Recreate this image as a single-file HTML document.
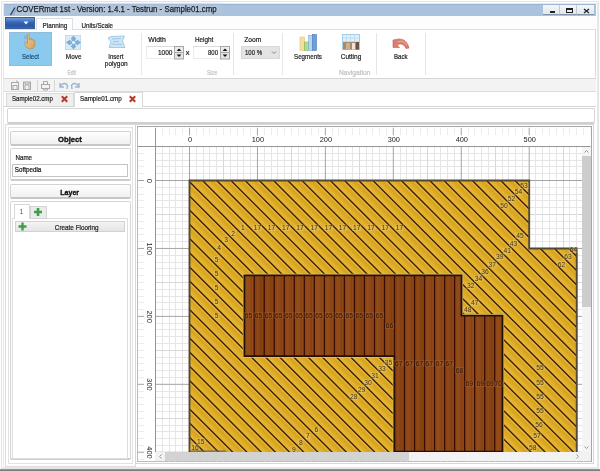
<!DOCTYPE html>
<html><head><meta charset="utf-8"><style>
html,body{margin:0;padding:0;}
body{width:600px;height:471px;position:relative;overflow:hidden;background:#fff;font-family:"Liberation Sans",sans-serif;}
.a{position:absolute;}
svg{will-change:transform;}
</style></head><body>

<!-- window frame -->
<div class="a" style="left:1px;top:1px;width:598px;height:468px;border:1px solid #e4e4e4;box-sizing:border-box"></div>
<div class="a" style="left:0;top:469px;width:600px;height:2px;background:linear-gradient(#a0a0a0,#707070)"></div>
<div class="a" style="left:3px;top:3px;width:595px;height:465px;border:1px solid #e8e8e8;box-sizing:border-box"></div>
<!-- title bar -->
<div class="a" style="left:4px;top:4px;width:592px;height:12px;background:#a9c2dd;border-top:1px solid #9cb5d2;box-sizing:border-box"></div>
<div class="a" style="left:12px;top:5px;width:210px;height:10px;background:#b3c4d8;filter:blur(2px)"></div>
<svg class="a" style="left:9px;top:6px" width="8" height="10"><path d="M1.5 9 L6 1.5" stroke="#253a60" stroke-width="1.4"/><path d="M4 9 L7.5 3.5" stroke="#7f94b4" stroke-width="0.8"/></svg>
<!-- window buttons -->
<div class="a" style="left:543px;top:5px;width:16px;height:10px;background:linear-gradient(#f4f6f9,#e2e7ee);border-bottom:1px solid #8494aa;box-sizing:border-box"></div>
<div class="a" style="left:559px;top:5px;width:17px;height:10px;background:linear-gradient(#f4f6f9,#e2e7ee);border-bottom:1px solid #8494aa;border-left:1px solid #c0c8d4;box-sizing:border-box"></div>
<div class="a" style="left:576px;top:5px;width:18px;height:10px;background:linear-gradient(#f4f6f9,#e2e7ee);border-bottom:1px solid #8494aa;border-left:1px solid #c0c8d4;box-sizing:border-box"></div>
<div class="a" style="left:550px;top:11px;width:5px;height:2px;background:#222"></div>
<div class="a" style="left:566px;top:8px;width:7px;height:5px;border:1px solid #222;border-top-width:2px;box-sizing:border-box"></div>
<svg class="a" style="left:583px;top:8px" width="7" height="6"><path d="M1 1 L6 5 M6 1 L1 5" stroke="#222" stroke-width="1.3"/></svg>
<!-- ribbon tab row -->
<div class="a" style="left:4px;top:16px;width:592px;height:14px;background:#fdfdfd"></div>
<div class="a" style="left:5px;top:17px;width:30px;height:12px;background:linear-gradient(#6f98d6,#3565b8 45%,#2a56a6 80%,#3a68b8);border:1px solid #3d5e96;box-sizing:border-box"></div>
<svg class="a" style="left:23px;top:21px" width="6" height="4"><path d="M0.5 0.5 L5.5 0.5 L3 3.5 Z" fill="#f4f8ff"/></svg>
<div class="a" style="left:4px;top:29px;width:592px;height:1px;background:#d9dfe6"></div>
<div class="a" style="left:36px;top:18px;width:37px;height:12px;background:#fff;border:1px solid #d9dfe6;border-bottom:none;box-sizing:border-box"></div>
<!-- ribbon body -->
<div class="a" style="left:4px;top:30px;width:592px;height:47px;background:#fff;"></div>
<div class="a" style="left:4px;top:78px;width:592px;height:1px;background:#d6d6d6"></div>
<div class="a" style="left:595px;top:29px;width:1px;height:50px;background:#dcdcdc"></div>
<div class="a" style="left:9px;top:32px;width:43px;height:34px;background:#8acaee;border:1px solid #92bcd8;box-sizing:border-box"></div>
<div class="a" style="left:141px;top:33px;width:1px;height:42px;background:#e6e6e6"></div>
<div class="a" style="left:146px;top:46px;width:29px;height:13px;background:#fff;border:1px solid #ececec;border-top-color:#dcdcdc;box-sizing:border-box"></div>
<div class="a" style="left:193px;top:46px;width:28px;height:13px;background:#fff;border:1px solid #ececec;border-top-color:#dcdcdc;box-sizing:border-box"></div>
<div class="a" style="left:233px;top:33px;width:1px;height:42px;background:#e6e6e6"></div>
<div class="a" style="left:241px;top:46px;width:39px;height:13px;background:#e4e4e4;border:1px solid #d8d8d8;box-sizing:border-box"></div>
<div class="a" style="left:282px;top:33px;width:1px;height:42px;background:#e6e6e6"></div>
<div class="a" style="left:376px;top:33px;width:1px;height:42px;background:#e6e6e6"></div>
<div class="a" style="left:425px;top:33px;width:1px;height:42px;background:#e6e6e6"></div>
<!-- QAT -->
<div class="a" style="left:4px;top:79px;width:592px;height:12px;background:#f3f3f3"></div>
<div class="a" style="left:4px;top:91px;width:592px;height:1px;background:#dcdcdc"></div>
<div class="a" style="left:37px;top:80px;width:1px;height:11px;background:#d6d6d6"></div>
<div class="a" style="left:54px;top:80px;width:1px;height:11px;background:#d6d6d6"></div>
<!-- doc tabs -->
<div class="a" style="left:4px;top:92px;width:592px;height:15px;background:#fff"></div>
<div class="a" style="left:6px;top:93px;width:68px;height:14px;background:#efefef;border:1px solid #dadada;border-bottom:none;box-sizing:border-box"></div>
<div class="a" style="left:74px;top:92px;width:69px;height:15px;background:#fff;border:1px solid #dadada;border-bottom:none;box-sizing:border-box"></div>
<div class="a" style="left:4px;top:106px;width:70px;height:1px;background:#d4d4d4"></div>
<div class="a" style="left:143px;top:106px;width:453px;height:1px;background:#d4d4d4"></div>
<!-- path bar -->
<div class="a" style="left:7px;top:108px;width:588px;height:16px;background:#fff;border:1px solid #d6d6d6;border-bottom:2px solid #cfcfcf;border-radius:2px;box-sizing:border-box"></div>
<!-- left panel frames -->
<div class="a" style="left:5px;top:124px;width:131px;height:343px;border:1px solid #dcdcdc;box-sizing:border-box"></div>
<div class="a" style="left:8px;top:127px;width:125px;height:337px;border:1px solid #e2e2e2;box-sizing:border-box"></div>
<div class="a" style="left:10px;top:131px;width:121px;height:15px;background:linear-gradient(#fefefe,#f0f0f0);border:1px solid #d2d2d2;border-bottom:2px solid #c6c6c6;border-radius:2px;box-sizing:border-box"></div>
<div class="a" style="left:10px;top:148px;width:121px;height:33px;background:#fff;border:1px solid #d6d6d6;border-bottom:2px solid #cdcdcd;border-radius:2px;box-sizing:border-box"></div>
<div class="a" style="left:12px;top:164px;width:116px;height:13px;background:#fff;border:1px solid #c4c4c4;box-sizing:border-box"></div>
<div class="a" style="left:10px;top:184px;width:121px;height:15px;background:linear-gradient(#fefefe,#f0f0f0);border:1px solid #d2d2d2;border-bottom:2px solid #c6c6c6;border-radius:2px;box-sizing:border-box"></div>
<div class="a" style="left:10px;top:201px;width:121px;height:259px;background:#fff;border:1px solid #d6d6d6;border-bottom:2px solid #cdcdcd;border-radius:2px;box-sizing:border-box"></div>
<div class="a" style="left:12px;top:218px;width:116px;height:241px;border:1px solid #dedede;box-sizing:border-box"></div>
<div class="a" style="left:14px;top:204px;width:16px;height:15px;background:#fff;border:1px solid #d8d8d8;border-bottom:none;box-sizing:border-box"></div>
<div class="a" style="left:30px;top:206px;width:17px;height:13px;background:#ebebeb;border:1px solid #d4d4d4;box-sizing:border-box"></div>
<div class="a" style="left:15px;top:221px;width:110px;height:11px;background:linear-gradient(#f3f3f3,#e5e5e5);border:1px solid #d2d2d2;box-sizing:border-box"></div>
<!-- canvas frame -->
<div class="a" style="left:135px;top:124px;width:459px;height:340px;border:1px solid #d6d6d6;box-sizing:border-box"></div>
<div class="a" style="left:137px;top:126px;width:455px;height:336px;border:1px solid #a6a6a6;box-sizing:border-box"></div>

<svg width="600" height="471" style="position:absolute;left:0;top:0">
<defs>
<clipPath id="cv"><rect x="137.5" y="127.5" width="453.0" height="334.0"/></clipPath>
<clipPath id="draw"><rect x="155.5" y="146.5" width="426.5" height="306.0"/></clipPath>
<clipPath id="gold"><polygon points="189.50,180.50 529.20,180.50 529.20,248.44 576.76,248.44 576.76,588.14 189.50,588.14"/></clipPath>
</defs>
<g clip-path="url(#cv)">
<rect x="137.5" y="127.5" width="453.0" height="334.0" fill="#fff"/>
<g shape-rendering="crispEdges"><line x1="155.53" y1="146.5" x2="155.53" y2="461.5" stroke="#d8d8d8"/><line x1="155.53" y1="127.5" x2="155.53" y2="135.3" stroke="#ededed"/><line x1="155.5" y1="146.53" x2="590.5" y2="146.53" stroke="#d8d8d8"/><line x1="137.5" y1="146.53" x2="144.0" y2="146.53" stroke="#ededed"/><line x1="162.32" y1="146.5" x2="162.32" y2="461.5" stroke="#e6e6e6"/><line x1="162.32" y1="127.5" x2="162.32" y2="135.3" stroke="#ededed"/><line x1="155.5" y1="153.32" x2="590.5" y2="153.32" stroke="#e6e6e6"/><line x1="137.5" y1="153.32" x2="144.0" y2="153.32" stroke="#ededed"/><line x1="169.12" y1="146.5" x2="169.12" y2="461.5" stroke="#e6e6e6"/><line x1="169.12" y1="127.5" x2="169.12" y2="135.3" stroke="#ededed"/><line x1="155.5" y1="160.12" x2="590.5" y2="160.12" stroke="#e6e6e6"/><line x1="137.5" y1="160.12" x2="144.0" y2="160.12" stroke="#ededed"/><line x1="175.91" y1="146.5" x2="175.91" y2="461.5" stroke="#e6e6e6"/><line x1="175.91" y1="127.5" x2="175.91" y2="135.3" stroke="#ededed"/><line x1="155.5" y1="166.91" x2="590.5" y2="166.91" stroke="#e6e6e6"/><line x1="137.5" y1="166.91" x2="144.0" y2="166.91" stroke="#ededed"/><line x1="182.71" y1="146.5" x2="182.71" y2="461.5" stroke="#e6e6e6"/><line x1="182.71" y1="127.5" x2="182.71" y2="135.3" stroke="#ededed"/><line x1="155.5" y1="173.71" x2="590.5" y2="173.71" stroke="#e6e6e6"/><line x1="137.5" y1="173.71" x2="144.0" y2="173.71" stroke="#ededed"/><line x1="196.29" y1="146.5" x2="196.29" y2="461.5" stroke="#e6e6e6"/><line x1="196.29" y1="127.5" x2="196.29" y2="135.3" stroke="#ededed"/><line x1="155.5" y1="187.29" x2="590.5" y2="187.29" stroke="#e6e6e6"/><line x1="137.5" y1="187.29" x2="144.0" y2="187.29" stroke="#ededed"/><line x1="203.09" y1="146.5" x2="203.09" y2="461.5" stroke="#e6e6e6"/><line x1="203.09" y1="127.5" x2="203.09" y2="135.3" stroke="#ededed"/><line x1="155.5" y1="194.09" x2="590.5" y2="194.09" stroke="#e6e6e6"/><line x1="137.5" y1="194.09" x2="144.0" y2="194.09" stroke="#ededed"/><line x1="209.88" y1="146.5" x2="209.88" y2="461.5" stroke="#e6e6e6"/><line x1="209.88" y1="127.5" x2="209.88" y2="135.3" stroke="#ededed"/><line x1="155.5" y1="200.88" x2="590.5" y2="200.88" stroke="#e6e6e6"/><line x1="137.5" y1="200.88" x2="144.0" y2="200.88" stroke="#ededed"/><line x1="216.68" y1="146.5" x2="216.68" y2="461.5" stroke="#e6e6e6"/><line x1="216.68" y1="127.5" x2="216.68" y2="135.3" stroke="#ededed"/><line x1="155.5" y1="207.68" x2="590.5" y2="207.68" stroke="#e6e6e6"/><line x1="137.5" y1="207.68" x2="144.0" y2="207.68" stroke="#ededed"/><line x1="223.47" y1="146.5" x2="223.47" y2="461.5" stroke="#d8d8d8"/><line x1="223.47" y1="127.5" x2="223.47" y2="135.3" stroke="#ededed"/><line x1="155.5" y1="214.47" x2="590.5" y2="214.47" stroke="#d8d8d8"/><line x1="137.5" y1="214.47" x2="144.0" y2="214.47" stroke="#ededed"/><line x1="230.26" y1="146.5" x2="230.26" y2="461.5" stroke="#e6e6e6"/><line x1="230.26" y1="127.5" x2="230.26" y2="135.3" stroke="#ededed"/><line x1="155.5" y1="221.26" x2="590.5" y2="221.26" stroke="#e6e6e6"/><line x1="137.5" y1="221.26" x2="144.0" y2="221.26" stroke="#ededed"/><line x1="237.06" y1="146.5" x2="237.06" y2="461.5" stroke="#e6e6e6"/><line x1="237.06" y1="127.5" x2="237.06" y2="135.3" stroke="#ededed"/><line x1="155.5" y1="228.06" x2="590.5" y2="228.06" stroke="#e6e6e6"/><line x1="137.5" y1="228.06" x2="144.0" y2="228.06" stroke="#ededed"/><line x1="243.85" y1="146.5" x2="243.85" y2="461.5" stroke="#e6e6e6"/><line x1="243.85" y1="127.5" x2="243.85" y2="135.3" stroke="#ededed"/><line x1="155.5" y1="234.85" x2="590.5" y2="234.85" stroke="#e6e6e6"/><line x1="137.5" y1="234.85" x2="144.0" y2="234.85" stroke="#ededed"/><line x1="250.65" y1="146.5" x2="250.65" y2="461.5" stroke="#e6e6e6"/><line x1="250.65" y1="127.5" x2="250.65" y2="135.3" stroke="#ededed"/><line x1="155.5" y1="241.65" x2="590.5" y2="241.65" stroke="#e6e6e6"/><line x1="137.5" y1="241.65" x2="144.0" y2="241.65" stroke="#ededed"/><line x1="264.23" y1="146.5" x2="264.23" y2="461.5" stroke="#e6e6e6"/><line x1="264.23" y1="127.5" x2="264.23" y2="135.3" stroke="#ededed"/><line x1="155.5" y1="255.23" x2="590.5" y2="255.23" stroke="#e6e6e6"/><line x1="137.5" y1="255.23" x2="144.0" y2="255.23" stroke="#ededed"/><line x1="271.03" y1="146.5" x2="271.03" y2="461.5" stroke="#e6e6e6"/><line x1="271.03" y1="127.5" x2="271.03" y2="135.3" stroke="#ededed"/><line x1="155.5" y1="262.03" x2="590.5" y2="262.03" stroke="#e6e6e6"/><line x1="137.5" y1="262.03" x2="144.0" y2="262.03" stroke="#ededed"/><line x1="277.82" y1="146.5" x2="277.82" y2="461.5" stroke="#e6e6e6"/><line x1="277.82" y1="127.5" x2="277.82" y2="135.3" stroke="#ededed"/><line x1="155.5" y1="268.82" x2="590.5" y2="268.82" stroke="#e6e6e6"/><line x1="137.5" y1="268.82" x2="144.0" y2="268.82" stroke="#ededed"/><line x1="284.62" y1="146.5" x2="284.62" y2="461.5" stroke="#e6e6e6"/><line x1="284.62" y1="127.5" x2="284.62" y2="135.3" stroke="#ededed"/><line x1="155.5" y1="275.62" x2="590.5" y2="275.62" stroke="#e6e6e6"/><line x1="137.5" y1="275.62" x2="144.0" y2="275.62" stroke="#ededed"/><line x1="291.41" y1="146.5" x2="291.41" y2="461.5" stroke="#d8d8d8"/><line x1="291.41" y1="127.5" x2="291.41" y2="135.3" stroke="#ededed"/><line x1="155.5" y1="282.41" x2="590.5" y2="282.41" stroke="#d8d8d8"/><line x1="137.5" y1="282.41" x2="144.0" y2="282.41" stroke="#ededed"/><line x1="298.20" y1="146.5" x2="298.20" y2="461.5" stroke="#e6e6e6"/><line x1="298.20" y1="127.5" x2="298.20" y2="135.3" stroke="#ededed"/><line x1="155.5" y1="289.20" x2="590.5" y2="289.20" stroke="#e6e6e6"/><line x1="137.5" y1="289.20" x2="144.0" y2="289.20" stroke="#ededed"/><line x1="305.00" y1="146.5" x2="305.00" y2="461.5" stroke="#e6e6e6"/><line x1="305.00" y1="127.5" x2="305.00" y2="135.3" stroke="#ededed"/><line x1="155.5" y1="296.00" x2="590.5" y2="296.00" stroke="#e6e6e6"/><line x1="137.5" y1="296.00" x2="144.0" y2="296.00" stroke="#ededed"/><line x1="311.79" y1="146.5" x2="311.79" y2="461.5" stroke="#e6e6e6"/><line x1="311.79" y1="127.5" x2="311.79" y2="135.3" stroke="#ededed"/><line x1="155.5" y1="302.79" x2="590.5" y2="302.79" stroke="#e6e6e6"/><line x1="137.5" y1="302.79" x2="144.0" y2="302.79" stroke="#ededed"/><line x1="318.59" y1="146.5" x2="318.59" y2="461.5" stroke="#e6e6e6"/><line x1="318.59" y1="127.5" x2="318.59" y2="135.3" stroke="#ededed"/><line x1="155.5" y1="309.59" x2="590.5" y2="309.59" stroke="#e6e6e6"/><line x1="137.5" y1="309.59" x2="144.0" y2="309.59" stroke="#ededed"/><line x1="332.17" y1="146.5" x2="332.17" y2="461.5" stroke="#e6e6e6"/><line x1="332.17" y1="127.5" x2="332.17" y2="135.3" stroke="#ededed"/><line x1="155.5" y1="323.17" x2="590.5" y2="323.17" stroke="#e6e6e6"/><line x1="137.5" y1="323.17" x2="144.0" y2="323.17" stroke="#ededed"/><line x1="338.97" y1="146.5" x2="338.97" y2="461.5" stroke="#e6e6e6"/><line x1="338.97" y1="127.5" x2="338.97" y2="135.3" stroke="#ededed"/><line x1="155.5" y1="329.97" x2="590.5" y2="329.97" stroke="#e6e6e6"/><line x1="137.5" y1="329.97" x2="144.0" y2="329.97" stroke="#ededed"/><line x1="345.76" y1="146.5" x2="345.76" y2="461.5" stroke="#e6e6e6"/><line x1="345.76" y1="127.5" x2="345.76" y2="135.3" stroke="#ededed"/><line x1="155.5" y1="336.76" x2="590.5" y2="336.76" stroke="#e6e6e6"/><line x1="137.5" y1="336.76" x2="144.0" y2="336.76" stroke="#ededed"/><line x1="352.56" y1="146.5" x2="352.56" y2="461.5" stroke="#e6e6e6"/><line x1="352.56" y1="127.5" x2="352.56" y2="135.3" stroke="#ededed"/><line x1="155.5" y1="343.56" x2="590.5" y2="343.56" stroke="#e6e6e6"/><line x1="137.5" y1="343.56" x2="144.0" y2="343.56" stroke="#ededed"/><line x1="359.35" y1="146.5" x2="359.35" y2="461.5" stroke="#d8d8d8"/><line x1="359.35" y1="127.5" x2="359.35" y2="135.3" stroke="#ededed"/><line x1="155.5" y1="350.35" x2="590.5" y2="350.35" stroke="#d8d8d8"/><line x1="137.5" y1="350.35" x2="144.0" y2="350.35" stroke="#ededed"/><line x1="366.14" y1="146.5" x2="366.14" y2="461.5" stroke="#e6e6e6"/><line x1="366.14" y1="127.5" x2="366.14" y2="135.3" stroke="#ededed"/><line x1="155.5" y1="357.14" x2="590.5" y2="357.14" stroke="#e6e6e6"/><line x1="137.5" y1="357.14" x2="144.0" y2="357.14" stroke="#ededed"/><line x1="372.94" y1="146.5" x2="372.94" y2="461.5" stroke="#e6e6e6"/><line x1="372.94" y1="127.5" x2="372.94" y2="135.3" stroke="#ededed"/><line x1="155.5" y1="363.94" x2="590.5" y2="363.94" stroke="#e6e6e6"/><line x1="137.5" y1="363.94" x2="144.0" y2="363.94" stroke="#ededed"/><line x1="379.73" y1="146.5" x2="379.73" y2="461.5" stroke="#e6e6e6"/><line x1="379.73" y1="127.5" x2="379.73" y2="135.3" stroke="#ededed"/><line x1="155.5" y1="370.73" x2="590.5" y2="370.73" stroke="#e6e6e6"/><line x1="137.5" y1="370.73" x2="144.0" y2="370.73" stroke="#ededed"/><line x1="386.53" y1="146.5" x2="386.53" y2="461.5" stroke="#e6e6e6"/><line x1="386.53" y1="127.5" x2="386.53" y2="135.3" stroke="#ededed"/><line x1="155.5" y1="377.53" x2="590.5" y2="377.53" stroke="#e6e6e6"/><line x1="137.5" y1="377.53" x2="144.0" y2="377.53" stroke="#ededed"/><line x1="400.11" y1="146.5" x2="400.11" y2="461.5" stroke="#e6e6e6"/><line x1="400.11" y1="127.5" x2="400.11" y2="135.3" stroke="#ededed"/><line x1="155.5" y1="391.11" x2="590.5" y2="391.11" stroke="#e6e6e6"/><line x1="137.5" y1="391.11" x2="144.0" y2="391.11" stroke="#ededed"/><line x1="406.91" y1="146.5" x2="406.91" y2="461.5" stroke="#e6e6e6"/><line x1="406.91" y1="127.5" x2="406.91" y2="135.3" stroke="#ededed"/><line x1="155.5" y1="397.91" x2="590.5" y2="397.91" stroke="#e6e6e6"/><line x1="137.5" y1="397.91" x2="144.0" y2="397.91" stroke="#ededed"/><line x1="413.70" y1="146.5" x2="413.70" y2="461.5" stroke="#e6e6e6"/><line x1="413.70" y1="127.5" x2="413.70" y2="135.3" stroke="#ededed"/><line x1="155.5" y1="404.70" x2="590.5" y2="404.70" stroke="#e6e6e6"/><line x1="137.5" y1="404.70" x2="144.0" y2="404.70" stroke="#ededed"/><line x1="420.50" y1="146.5" x2="420.50" y2="461.5" stroke="#e6e6e6"/><line x1="420.50" y1="127.5" x2="420.50" y2="135.3" stroke="#ededed"/><line x1="155.5" y1="411.50" x2="590.5" y2="411.50" stroke="#e6e6e6"/><line x1="137.5" y1="411.50" x2="144.0" y2="411.50" stroke="#ededed"/><line x1="427.29" y1="146.5" x2="427.29" y2="461.5" stroke="#d8d8d8"/><line x1="427.29" y1="127.5" x2="427.29" y2="135.3" stroke="#ededed"/><line x1="155.5" y1="418.29" x2="590.5" y2="418.29" stroke="#d8d8d8"/><line x1="137.5" y1="418.29" x2="144.0" y2="418.29" stroke="#ededed"/><line x1="434.08" y1="146.5" x2="434.08" y2="461.5" stroke="#e6e6e6"/><line x1="434.08" y1="127.5" x2="434.08" y2="135.3" stroke="#ededed"/><line x1="155.5" y1="425.08" x2="590.5" y2="425.08" stroke="#e6e6e6"/><line x1="137.5" y1="425.08" x2="144.0" y2="425.08" stroke="#ededed"/><line x1="440.88" y1="146.5" x2="440.88" y2="461.5" stroke="#e6e6e6"/><line x1="440.88" y1="127.5" x2="440.88" y2="135.3" stroke="#ededed"/><line x1="155.5" y1="431.88" x2="590.5" y2="431.88" stroke="#e6e6e6"/><line x1="137.5" y1="431.88" x2="144.0" y2="431.88" stroke="#ededed"/><line x1="447.67" y1="146.5" x2="447.67" y2="461.5" stroke="#e6e6e6"/><line x1="447.67" y1="127.5" x2="447.67" y2="135.3" stroke="#ededed"/><line x1="155.5" y1="438.67" x2="590.5" y2="438.67" stroke="#e6e6e6"/><line x1="137.5" y1="438.67" x2="144.0" y2="438.67" stroke="#ededed"/><line x1="454.47" y1="146.5" x2="454.47" y2="461.5" stroke="#e6e6e6"/><line x1="454.47" y1="127.5" x2="454.47" y2="135.3" stroke="#ededed"/><line x1="155.5" y1="445.47" x2="590.5" y2="445.47" stroke="#e6e6e6"/><line x1="137.5" y1="445.47" x2="144.0" y2="445.47" stroke="#ededed"/><line x1="468.05" y1="146.5" x2="468.05" y2="461.5" stroke="#e6e6e6"/><line x1="468.05" y1="127.5" x2="468.05" y2="135.3" stroke="#ededed"/><line x1="155.5" y1="459.05" x2="590.5" y2="459.05" stroke="#e6e6e6"/><line x1="137.5" y1="459.05" x2="144.0" y2="459.05" stroke="#ededed"/><line x1="474.85" y1="146.5" x2="474.85" y2="461.5" stroke="#e6e6e6"/><line x1="474.85" y1="127.5" x2="474.85" y2="135.3" stroke="#ededed"/><line x1="481.64" y1="146.5" x2="481.64" y2="461.5" stroke="#e6e6e6"/><line x1="481.64" y1="127.5" x2="481.64" y2="135.3" stroke="#ededed"/><line x1="488.44" y1="146.5" x2="488.44" y2="461.5" stroke="#e6e6e6"/><line x1="488.44" y1="127.5" x2="488.44" y2="135.3" stroke="#ededed"/><line x1="495.23" y1="146.5" x2="495.23" y2="461.5" stroke="#d8d8d8"/><line x1="495.23" y1="127.5" x2="495.23" y2="135.3" stroke="#ededed"/><line x1="502.02" y1="146.5" x2="502.02" y2="461.5" stroke="#e6e6e6"/><line x1="502.02" y1="127.5" x2="502.02" y2="135.3" stroke="#ededed"/><line x1="508.82" y1="146.5" x2="508.82" y2="461.5" stroke="#e6e6e6"/><line x1="508.82" y1="127.5" x2="508.82" y2="135.3" stroke="#ededed"/><line x1="515.61" y1="146.5" x2="515.61" y2="461.5" stroke="#e6e6e6"/><line x1="515.61" y1="127.5" x2="515.61" y2="135.3" stroke="#ededed"/><line x1="522.41" y1="146.5" x2="522.41" y2="461.5" stroke="#e6e6e6"/><line x1="522.41" y1="127.5" x2="522.41" y2="135.3" stroke="#ededed"/><line x1="535.99" y1="146.5" x2="535.99" y2="461.5" stroke="#e6e6e6"/><line x1="535.99" y1="127.5" x2="535.99" y2="135.3" stroke="#ededed"/><line x1="542.79" y1="146.5" x2="542.79" y2="461.5" stroke="#e6e6e6"/><line x1="542.79" y1="127.5" x2="542.79" y2="135.3" stroke="#ededed"/><line x1="549.58" y1="146.5" x2="549.58" y2="461.5" stroke="#e6e6e6"/><line x1="549.58" y1="127.5" x2="549.58" y2="135.3" stroke="#ededed"/><line x1="556.38" y1="146.5" x2="556.38" y2="461.5" stroke="#e6e6e6"/><line x1="556.38" y1="127.5" x2="556.38" y2="135.3" stroke="#ededed"/><line x1="563.17" y1="146.5" x2="563.17" y2="461.5" stroke="#d8d8d8"/><line x1="563.17" y1="127.5" x2="563.17" y2="135.3" stroke="#ededed"/><line x1="569.96" y1="146.5" x2="569.96" y2="461.5" stroke="#e6e6e6"/><line x1="569.96" y1="127.5" x2="569.96" y2="135.3" stroke="#ededed"/><line x1="576.76" y1="146.5" x2="576.76" y2="461.5" stroke="#e6e6e6"/><line x1="576.76" y1="127.5" x2="576.76" y2="135.3" stroke="#ededed"/><line x1="583.55" y1="146.5" x2="583.55" y2="461.5" stroke="#e6e6e6"/><line x1="583.55" y1="127.5" x2="583.55" y2="135.3" stroke="#ededed"/><line x1="590.35" y1="146.5" x2="590.35" y2="461.5" stroke="#e6e6e6"/><line x1="590.35" y1="127.5" x2="590.35" y2="135.3" stroke="#ededed"/></g>
<line x1="189.50" y1="146.5" x2="189.50" y2="461.5" stroke="#a4a4a4"/><line x1="189.50" y1="127.5" x2="189.50" y2="135.3" stroke="#a4a4a4"/><line x1="155.5" y1="180.50" x2="590.5" y2="180.50" stroke="#a4a4a4"/><line x1="137.5" y1="180.50" x2="144.0" y2="180.50" stroke="#a4a4a4"/><line x1="257.44" y1="146.5" x2="257.44" y2="461.5" stroke="#a4a4a4"/><line x1="257.44" y1="127.5" x2="257.44" y2="135.3" stroke="#a4a4a4"/><line x1="155.5" y1="248.44" x2="590.5" y2="248.44" stroke="#a4a4a4"/><line x1="137.5" y1="248.44" x2="144.0" y2="248.44" stroke="#a4a4a4"/><line x1="325.38" y1="146.5" x2="325.38" y2="461.5" stroke="#a4a4a4"/><line x1="325.38" y1="127.5" x2="325.38" y2="135.3" stroke="#a4a4a4"/><line x1="155.5" y1="316.38" x2="590.5" y2="316.38" stroke="#a4a4a4"/><line x1="137.5" y1="316.38" x2="144.0" y2="316.38" stroke="#a4a4a4"/><line x1="393.32" y1="146.5" x2="393.32" y2="461.5" stroke="#a4a4a4"/><line x1="393.32" y1="127.5" x2="393.32" y2="135.3" stroke="#a4a4a4"/><line x1="155.5" y1="384.32" x2="590.5" y2="384.32" stroke="#a4a4a4"/><line x1="137.5" y1="384.32" x2="144.0" y2="384.32" stroke="#a4a4a4"/><line x1="461.26" y1="146.5" x2="461.26" y2="461.5" stroke="#a4a4a4"/><line x1="461.26" y1="127.5" x2="461.26" y2="135.3" stroke="#a4a4a4"/><line x1="155.5" y1="452.26" x2="590.5" y2="452.26" stroke="#a4a4a4"/><line x1="137.5" y1="452.26" x2="144.0" y2="452.26" stroke="#a4a4a4"/><line x1="529.20" y1="146.5" x2="529.20" y2="461.5" stroke="#a4a4a4"/><line x1="529.20" y1="127.5" x2="529.20" y2="135.3" stroke="#a4a4a4"/>
<line x1="155.5" y1="127.5" x2="155.5" y2="461.5" stroke="#959595" stroke-width="1"/>
<line x1="137.5" y1="146.5" x2="590.5" y2="146.5" stroke="#959595" stroke-width="1"/>
<text x="190.0" y="142.2" font-size="7.4" text-anchor="middle" fill="#1a1a1a">0</text>
<text x="257.9" y="142.2" font-size="7.4" text-anchor="middle" fill="#1a1a1a">100</text>
<text x="325.9" y="142.2" font-size="7.4" text-anchor="middle" fill="#1a1a1a">200</text>
<text x="393.8" y="142.2" font-size="7.4" text-anchor="middle" fill="#1a1a1a">300</text>
<text x="461.8" y="142.2" font-size="7.4" text-anchor="middle" fill="#1a1a1a">400</text>
<text x="529.7" y="142.2" font-size="7.4" text-anchor="middle" fill="#1a1a1a">500</text>
<text transform="translate(147.2,180.7) rotate(90)" x="0" y="0" font-size="7.4" text-anchor="middle" fill="#1a1a1a">0</text>
<text transform="translate(147.2,248.6) rotate(90)" x="0" y="0" font-size="7.4" text-anchor="middle" fill="#1a1a1a">100</text>
<text transform="translate(147.2,316.6) rotate(90)" x="0" y="0" font-size="7.4" text-anchor="middle" fill="#1a1a1a">200</text>
<text transform="translate(147.2,384.5) rotate(90)" x="0" y="0" font-size="7.4" text-anchor="middle" fill="#1a1a1a">300</text>
<text transform="translate(147.2,452.5) rotate(90)" x="0" y="0" font-size="7.4" text-anchor="middle" fill="#1a1a1a">400</text>
<g clip-path="url(#draw)">
<polygon points="189.50,180.50 529.20,180.50 529.20,248.44 576.76,248.44 576.76,588.14 189.50,588.14" fill="#dfab22"/>
<g clip-path="url(#gold)"><line x1="-410.20" y1="150" x2="-80.20" y2="480" stroke="#eec866" stroke-width="3.6" opacity="0.45"/><line x1="-406.20" y1="150" x2="-76.20" y2="480" stroke="#e9bd45" stroke-width="1.2" opacity="0.6"/><line x1="-415.20" y1="150" x2="-85.20" y2="480" stroke="#d49e22" stroke-width="1.5" opacity="0.7"/><line x1="-410.20" y1="150" x2="-80.20" y2="480" stroke="#3a1f00" stroke-width="1.4"/><line x1="-396.00" y1="150" x2="-66.00" y2="480" stroke="#eec866" stroke-width="3.6" opacity="0.45"/><line x1="-392.00" y1="150" x2="-62.00" y2="480" stroke="#e9bd45" stroke-width="1.2" opacity="0.6"/><line x1="-401.00" y1="150" x2="-71.00" y2="480" stroke="#d49e22" stroke-width="1.5" opacity="0.7"/><line x1="-396.00" y1="150" x2="-66.00" y2="480" stroke="#3a1f00" stroke-width="1.4"/><line x1="-381.80" y1="150" x2="-51.80" y2="480" stroke="#eec866" stroke-width="3.6" opacity="0.45"/><line x1="-377.80" y1="150" x2="-47.80" y2="480" stroke="#e9bd45" stroke-width="1.2" opacity="0.6"/><line x1="-386.80" y1="150" x2="-56.80" y2="480" stroke="#d49e22" stroke-width="1.5" opacity="0.7"/><line x1="-381.80" y1="150" x2="-51.80" y2="480" stroke="#3a1f00" stroke-width="1.4"/><line x1="-367.60" y1="150" x2="-37.60" y2="480" stroke="#eec866" stroke-width="3.6" opacity="0.45"/><line x1="-363.60" y1="150" x2="-33.60" y2="480" stroke="#e9bd45" stroke-width="1.2" opacity="0.6"/><line x1="-372.60" y1="150" x2="-42.60" y2="480" stroke="#d49e22" stroke-width="1.5" opacity="0.7"/><line x1="-367.60" y1="150" x2="-37.60" y2="480" stroke="#3a1f00" stroke-width="1.4"/><line x1="-353.40" y1="150" x2="-23.40" y2="480" stroke="#eec866" stroke-width="3.6" opacity="0.45"/><line x1="-349.40" y1="150" x2="-19.40" y2="480" stroke="#e9bd45" stroke-width="1.2" opacity="0.6"/><line x1="-358.40" y1="150" x2="-28.40" y2="480" stroke="#d49e22" stroke-width="1.5" opacity="0.7"/><line x1="-353.40" y1="150" x2="-23.40" y2="480" stroke="#3a1f00" stroke-width="1.4"/><line x1="-339.20" y1="150" x2="-9.20" y2="480" stroke="#eec866" stroke-width="3.6" opacity="0.45"/><line x1="-335.20" y1="150" x2="-5.20" y2="480" stroke="#e9bd45" stroke-width="1.2" opacity="0.6"/><line x1="-344.20" y1="150" x2="-14.20" y2="480" stroke="#d49e22" stroke-width="1.5" opacity="0.7"/><line x1="-339.20" y1="150" x2="-9.20" y2="480" stroke="#3a1f00" stroke-width="1.4"/><line x1="-325.00" y1="150" x2="5.00" y2="480" stroke="#eec866" stroke-width="3.6" opacity="0.45"/><line x1="-321.00" y1="150" x2="9.00" y2="480" stroke="#e9bd45" stroke-width="1.2" opacity="0.6"/><line x1="-330.00" y1="150" x2="0.00" y2="480" stroke="#d49e22" stroke-width="1.5" opacity="0.7"/><line x1="-325.00" y1="150" x2="5.00" y2="480" stroke="#3a1f00" stroke-width="1.4"/><line x1="-310.80" y1="150" x2="19.20" y2="480" stroke="#eec866" stroke-width="3.6" opacity="0.45"/><line x1="-306.80" y1="150" x2="23.20" y2="480" stroke="#e9bd45" stroke-width="1.2" opacity="0.6"/><line x1="-315.80" y1="150" x2="14.20" y2="480" stroke="#d49e22" stroke-width="1.5" opacity="0.7"/><line x1="-310.80" y1="150" x2="19.20" y2="480" stroke="#3a1f00" stroke-width="1.4"/><line x1="-296.60" y1="150" x2="33.40" y2="480" stroke="#eec866" stroke-width="3.6" opacity="0.45"/><line x1="-292.60" y1="150" x2="37.40" y2="480" stroke="#e9bd45" stroke-width="1.2" opacity="0.6"/><line x1="-301.60" y1="150" x2="28.40" y2="480" stroke="#d49e22" stroke-width="1.5" opacity="0.7"/><line x1="-296.60" y1="150" x2="33.40" y2="480" stroke="#3a1f00" stroke-width="1.4"/><line x1="-282.40" y1="150" x2="47.60" y2="480" stroke="#eec866" stroke-width="3.6" opacity="0.45"/><line x1="-278.40" y1="150" x2="51.60" y2="480" stroke="#e9bd45" stroke-width="1.2" opacity="0.6"/><line x1="-287.40" y1="150" x2="42.60" y2="480" stroke="#d49e22" stroke-width="1.5" opacity="0.7"/><line x1="-282.40" y1="150" x2="47.60" y2="480" stroke="#3a1f00" stroke-width="1.4"/><line x1="-268.20" y1="150" x2="61.80" y2="480" stroke="#eec866" stroke-width="3.6" opacity="0.45"/><line x1="-264.20" y1="150" x2="65.80" y2="480" stroke="#e9bd45" stroke-width="1.2" opacity="0.6"/><line x1="-273.20" y1="150" x2="56.80" y2="480" stroke="#d49e22" stroke-width="1.5" opacity="0.7"/><line x1="-268.20" y1="150" x2="61.80" y2="480" stroke="#3a1f00" stroke-width="1.4"/><line x1="-254.00" y1="150" x2="76.00" y2="480" stroke="#eec866" stroke-width="3.6" opacity="0.45"/><line x1="-250.00" y1="150" x2="80.00" y2="480" stroke="#e9bd45" stroke-width="1.2" opacity="0.6"/><line x1="-259.00" y1="150" x2="71.00" y2="480" stroke="#d49e22" stroke-width="1.5" opacity="0.7"/><line x1="-254.00" y1="150" x2="76.00" y2="480" stroke="#3a1f00" stroke-width="1.4"/><line x1="-239.80" y1="150" x2="90.20" y2="480" stroke="#eec866" stroke-width="3.6" opacity="0.45"/><line x1="-235.80" y1="150" x2="94.20" y2="480" stroke="#e9bd45" stroke-width="1.2" opacity="0.6"/><line x1="-244.80" y1="150" x2="85.20" y2="480" stroke="#d49e22" stroke-width="1.5" opacity="0.7"/><line x1="-239.80" y1="150" x2="90.20" y2="480" stroke="#3a1f00" stroke-width="1.4"/><line x1="-225.60" y1="150" x2="104.40" y2="480" stroke="#eec866" stroke-width="3.6" opacity="0.45"/><line x1="-221.60" y1="150" x2="108.40" y2="480" stroke="#e9bd45" stroke-width="1.2" opacity="0.6"/><line x1="-230.60" y1="150" x2="99.40" y2="480" stroke="#d49e22" stroke-width="1.5" opacity="0.7"/><line x1="-225.60" y1="150" x2="104.40" y2="480" stroke="#3a1f00" stroke-width="1.4"/><line x1="-211.40" y1="150" x2="118.60" y2="480" stroke="#eec866" stroke-width="3.6" opacity="0.45"/><line x1="-207.40" y1="150" x2="122.60" y2="480" stroke="#e9bd45" stroke-width="1.2" opacity="0.6"/><line x1="-216.40" y1="150" x2="113.60" y2="480" stroke="#d49e22" stroke-width="1.5" opacity="0.7"/><line x1="-211.40" y1="150" x2="118.60" y2="480" stroke="#3a1f00" stroke-width="1.4"/><line x1="-197.20" y1="150" x2="132.80" y2="480" stroke="#eec866" stroke-width="3.6" opacity="0.45"/><line x1="-193.20" y1="150" x2="136.80" y2="480" stroke="#e9bd45" stroke-width="1.2" opacity="0.6"/><line x1="-202.20" y1="150" x2="127.80" y2="480" stroke="#d49e22" stroke-width="1.5" opacity="0.7"/><line x1="-197.20" y1="150" x2="132.80" y2="480" stroke="#3a1f00" stroke-width="1.4"/><line x1="-183.00" y1="150" x2="147.00" y2="480" stroke="#eec866" stroke-width="3.6" opacity="0.45"/><line x1="-179.00" y1="150" x2="151.00" y2="480" stroke="#e9bd45" stroke-width="1.2" opacity="0.6"/><line x1="-188.00" y1="150" x2="142.00" y2="480" stroke="#d49e22" stroke-width="1.5" opacity="0.7"/><line x1="-183.00" y1="150" x2="147.00" y2="480" stroke="#3a1f00" stroke-width="1.4"/><line x1="-168.80" y1="150" x2="161.20" y2="480" stroke="#eec866" stroke-width="3.6" opacity="0.45"/><line x1="-164.80" y1="150" x2="165.20" y2="480" stroke="#e9bd45" stroke-width="1.2" opacity="0.6"/><line x1="-173.80" y1="150" x2="156.20" y2="480" stroke="#d49e22" stroke-width="1.5" opacity="0.7"/><line x1="-168.80" y1="150" x2="161.20" y2="480" stroke="#3a1f00" stroke-width="1.4"/><line x1="-154.60" y1="150" x2="175.40" y2="480" stroke="#eec866" stroke-width="3.6" opacity="0.45"/><line x1="-150.60" y1="150" x2="179.40" y2="480" stroke="#e9bd45" stroke-width="1.2" opacity="0.6"/><line x1="-159.60" y1="150" x2="170.40" y2="480" stroke="#d49e22" stroke-width="1.5" opacity="0.7"/><line x1="-154.60" y1="150" x2="175.40" y2="480" stroke="#3a1f00" stroke-width="1.4"/><line x1="-140.40" y1="150" x2="189.60" y2="480" stroke="#eec866" stroke-width="3.6" opacity="0.45"/><line x1="-136.40" y1="150" x2="193.60" y2="480" stroke="#e9bd45" stroke-width="1.2" opacity="0.6"/><line x1="-145.40" y1="150" x2="184.60" y2="480" stroke="#d49e22" stroke-width="1.5" opacity="0.7"/><line x1="-140.40" y1="150" x2="189.60" y2="480" stroke="#3a1f00" stroke-width="1.4"/><line x1="-126.20" y1="150" x2="203.80" y2="480" stroke="#eec866" stroke-width="3.6" opacity="0.45"/><line x1="-122.20" y1="150" x2="207.80" y2="480" stroke="#e9bd45" stroke-width="1.2" opacity="0.6"/><line x1="-131.20" y1="150" x2="198.80" y2="480" stroke="#d49e22" stroke-width="1.5" opacity="0.7"/><line x1="-126.20" y1="150" x2="203.80" y2="480" stroke="#3a1f00" stroke-width="1.4"/><line x1="-112.00" y1="150" x2="218.00" y2="480" stroke="#eec866" stroke-width="3.6" opacity="0.45"/><line x1="-108.00" y1="150" x2="222.00" y2="480" stroke="#e9bd45" stroke-width="1.2" opacity="0.6"/><line x1="-117.00" y1="150" x2="213.00" y2="480" stroke="#d49e22" stroke-width="1.5" opacity="0.7"/><line x1="-112.00" y1="150" x2="218.00" y2="480" stroke="#3a1f00" stroke-width="1.4"/><line x1="-97.80" y1="150" x2="232.20" y2="480" stroke="#eec866" stroke-width="3.6" opacity="0.45"/><line x1="-93.80" y1="150" x2="236.20" y2="480" stroke="#e9bd45" stroke-width="1.2" opacity="0.6"/><line x1="-102.80" y1="150" x2="227.20" y2="480" stroke="#d49e22" stroke-width="1.5" opacity="0.7"/><line x1="-97.80" y1="150" x2="232.20" y2="480" stroke="#3a1f00" stroke-width="1.4"/><line x1="-83.60" y1="150" x2="246.40" y2="480" stroke="#eec866" stroke-width="3.6" opacity="0.45"/><line x1="-79.60" y1="150" x2="250.40" y2="480" stroke="#e9bd45" stroke-width="1.2" opacity="0.6"/><line x1="-88.60" y1="150" x2="241.40" y2="480" stroke="#d49e22" stroke-width="1.5" opacity="0.7"/><line x1="-83.60" y1="150" x2="246.40" y2="480" stroke="#3a1f00" stroke-width="1.4"/><line x1="-69.40" y1="150" x2="260.60" y2="480" stroke="#eec866" stroke-width="3.6" opacity="0.45"/><line x1="-65.40" y1="150" x2="264.60" y2="480" stroke="#e9bd45" stroke-width="1.2" opacity="0.6"/><line x1="-74.40" y1="150" x2="255.60" y2="480" stroke="#d49e22" stroke-width="1.5" opacity="0.7"/><line x1="-69.40" y1="150" x2="260.60" y2="480" stroke="#3a1f00" stroke-width="1.4"/><line x1="-55.20" y1="150" x2="274.80" y2="480" stroke="#eec866" stroke-width="3.6" opacity="0.45"/><line x1="-51.20" y1="150" x2="278.80" y2="480" stroke="#e9bd45" stroke-width="1.2" opacity="0.6"/><line x1="-60.20" y1="150" x2="269.80" y2="480" stroke="#d49e22" stroke-width="1.5" opacity="0.7"/><line x1="-55.20" y1="150" x2="274.80" y2="480" stroke="#3a1f00" stroke-width="1.4"/><line x1="-41.00" y1="150" x2="289.00" y2="480" stroke="#eec866" stroke-width="3.6" opacity="0.45"/><line x1="-37.00" y1="150" x2="293.00" y2="480" stroke="#e9bd45" stroke-width="1.2" opacity="0.6"/><line x1="-46.00" y1="150" x2="284.00" y2="480" stroke="#d49e22" stroke-width="1.5" opacity="0.7"/><line x1="-41.00" y1="150" x2="289.00" y2="480" stroke="#3a1f00" stroke-width="1.4"/><line x1="-26.80" y1="150" x2="303.20" y2="480" stroke="#eec866" stroke-width="3.6" opacity="0.45"/><line x1="-22.80" y1="150" x2="307.20" y2="480" stroke="#e9bd45" stroke-width="1.2" opacity="0.6"/><line x1="-31.80" y1="150" x2="298.20" y2="480" stroke="#d49e22" stroke-width="1.5" opacity="0.7"/><line x1="-26.80" y1="150" x2="303.20" y2="480" stroke="#3a1f00" stroke-width="1.4"/><line x1="-12.60" y1="150" x2="317.40" y2="480" stroke="#eec866" stroke-width="3.6" opacity="0.45"/><line x1="-8.60" y1="150" x2="321.40" y2="480" stroke="#e9bd45" stroke-width="1.2" opacity="0.6"/><line x1="-17.60" y1="150" x2="312.40" y2="480" stroke="#d49e22" stroke-width="1.5" opacity="0.7"/><line x1="-12.60" y1="150" x2="317.40" y2="480" stroke="#3a1f00" stroke-width="1.4"/><line x1="1.60" y1="150" x2="331.60" y2="480" stroke="#eec866" stroke-width="3.6" opacity="0.45"/><line x1="5.60" y1="150" x2="335.60" y2="480" stroke="#e9bd45" stroke-width="1.2" opacity="0.6"/><line x1="-3.40" y1="150" x2="326.60" y2="480" stroke="#d49e22" stroke-width="1.5" opacity="0.7"/><line x1="1.60" y1="150" x2="331.60" y2="480" stroke="#3a1f00" stroke-width="1.4"/><line x1="15.80" y1="150" x2="345.80" y2="480" stroke="#eec866" stroke-width="3.6" opacity="0.45"/><line x1="19.80" y1="150" x2="349.80" y2="480" stroke="#e9bd45" stroke-width="1.2" opacity="0.6"/><line x1="10.80" y1="150" x2="340.80" y2="480" stroke="#d49e22" stroke-width="1.5" opacity="0.7"/><line x1="15.80" y1="150" x2="345.80" y2="480" stroke="#3a1f00" stroke-width="1.4"/><line x1="30.00" y1="150" x2="360.00" y2="480" stroke="#eec866" stroke-width="3.6" opacity="0.45"/><line x1="34.00" y1="150" x2="364.00" y2="480" stroke="#e9bd45" stroke-width="1.2" opacity="0.6"/><line x1="25.00" y1="150" x2="355.00" y2="480" stroke="#d49e22" stroke-width="1.5" opacity="0.7"/><line x1="30.00" y1="150" x2="360.00" y2="480" stroke="#3a1f00" stroke-width="1.4"/><line x1="44.20" y1="150" x2="374.20" y2="480" stroke="#eec866" stroke-width="3.6" opacity="0.45"/><line x1="48.20" y1="150" x2="378.20" y2="480" stroke="#e9bd45" stroke-width="1.2" opacity="0.6"/><line x1="39.20" y1="150" x2="369.20" y2="480" stroke="#d49e22" stroke-width="1.5" opacity="0.7"/><line x1="44.20" y1="150" x2="374.20" y2="480" stroke="#3a1f00" stroke-width="1.4"/><line x1="58.40" y1="150" x2="388.40" y2="480" stroke="#eec866" stroke-width="3.6" opacity="0.45"/><line x1="62.40" y1="150" x2="392.40" y2="480" stroke="#e9bd45" stroke-width="1.2" opacity="0.6"/><line x1="53.40" y1="150" x2="383.40" y2="480" stroke="#d49e22" stroke-width="1.5" opacity="0.7"/><line x1="58.40" y1="150" x2="388.40" y2="480" stroke="#3a1f00" stroke-width="1.4"/><line x1="72.60" y1="150" x2="402.60" y2="480" stroke="#eec866" stroke-width="3.6" opacity="0.45"/><line x1="76.60" y1="150" x2="406.60" y2="480" stroke="#e9bd45" stroke-width="1.2" opacity="0.6"/><line x1="67.60" y1="150" x2="397.60" y2="480" stroke="#d49e22" stroke-width="1.5" opacity="0.7"/><line x1="72.60" y1="150" x2="402.60" y2="480" stroke="#3a1f00" stroke-width="1.4"/><line x1="86.80" y1="150" x2="416.80" y2="480" stroke="#eec866" stroke-width="3.6" opacity="0.45"/><line x1="90.80" y1="150" x2="420.80" y2="480" stroke="#e9bd45" stroke-width="1.2" opacity="0.6"/><line x1="81.80" y1="150" x2="411.80" y2="480" stroke="#d49e22" stroke-width="1.5" opacity="0.7"/><line x1="86.80" y1="150" x2="416.80" y2="480" stroke="#3a1f00" stroke-width="1.4"/><line x1="101.00" y1="150" x2="431.00" y2="480" stroke="#eec866" stroke-width="3.6" opacity="0.45"/><line x1="105.00" y1="150" x2="435.00" y2="480" stroke="#e9bd45" stroke-width="1.2" opacity="0.6"/><line x1="96.00" y1="150" x2="426.00" y2="480" stroke="#d49e22" stroke-width="1.5" opacity="0.7"/><line x1="101.00" y1="150" x2="431.00" y2="480" stroke="#3a1f00" stroke-width="1.4"/><line x1="115.20" y1="150" x2="445.20" y2="480" stroke="#eec866" stroke-width="3.6" opacity="0.45"/><line x1="119.20" y1="150" x2="449.20" y2="480" stroke="#e9bd45" stroke-width="1.2" opacity="0.6"/><line x1="110.20" y1="150" x2="440.20" y2="480" stroke="#d49e22" stroke-width="1.5" opacity="0.7"/><line x1="115.20" y1="150" x2="445.20" y2="480" stroke="#3a1f00" stroke-width="1.4"/><line x1="129.40" y1="150" x2="459.40" y2="480" stroke="#eec866" stroke-width="3.6" opacity="0.45"/><line x1="133.40" y1="150" x2="463.40" y2="480" stroke="#e9bd45" stroke-width="1.2" opacity="0.6"/><line x1="124.40" y1="150" x2="454.40" y2="480" stroke="#d49e22" stroke-width="1.5" opacity="0.7"/><line x1="129.40" y1="150" x2="459.40" y2="480" stroke="#3a1f00" stroke-width="1.4"/><line x1="143.60" y1="150" x2="473.60" y2="480" stroke="#eec866" stroke-width="3.6" opacity="0.45"/><line x1="147.60" y1="150" x2="477.60" y2="480" stroke="#e9bd45" stroke-width="1.2" opacity="0.6"/><line x1="138.60" y1="150" x2="468.60" y2="480" stroke="#d49e22" stroke-width="1.5" opacity="0.7"/><line x1="143.60" y1="150" x2="473.60" y2="480" stroke="#3a1f00" stroke-width="1.4"/><line x1="157.80" y1="150" x2="487.80" y2="480" stroke="#eec866" stroke-width="3.6" opacity="0.45"/><line x1="161.80" y1="150" x2="491.80" y2="480" stroke="#e9bd45" stroke-width="1.2" opacity="0.6"/><line x1="152.80" y1="150" x2="482.80" y2="480" stroke="#d49e22" stroke-width="1.5" opacity="0.7"/><line x1="157.80" y1="150" x2="487.80" y2="480" stroke="#3a1f00" stroke-width="1.4"/><line x1="172.00" y1="150" x2="502.00" y2="480" stroke="#eec866" stroke-width="3.6" opacity="0.45"/><line x1="176.00" y1="150" x2="506.00" y2="480" stroke="#e9bd45" stroke-width="1.2" opacity="0.6"/><line x1="167.00" y1="150" x2="497.00" y2="480" stroke="#d49e22" stroke-width="1.5" opacity="0.7"/><line x1="172.00" y1="150" x2="502.00" y2="480" stroke="#3a1f00" stroke-width="1.4"/><line x1="186.20" y1="150" x2="516.20" y2="480" stroke="#eec866" stroke-width="3.6" opacity="0.45"/><line x1="190.20" y1="150" x2="520.20" y2="480" stroke="#e9bd45" stroke-width="1.2" opacity="0.6"/><line x1="181.20" y1="150" x2="511.20" y2="480" stroke="#d49e22" stroke-width="1.5" opacity="0.7"/><line x1="186.20" y1="150" x2="516.20" y2="480" stroke="#3a1f00" stroke-width="1.4"/><line x1="200.40" y1="150" x2="530.40" y2="480" stroke="#eec866" stroke-width="3.6" opacity="0.45"/><line x1="204.40" y1="150" x2="534.40" y2="480" stroke="#e9bd45" stroke-width="1.2" opacity="0.6"/><line x1="195.40" y1="150" x2="525.40" y2="480" stroke="#d49e22" stroke-width="1.5" opacity="0.7"/><line x1="200.40" y1="150" x2="530.40" y2="480" stroke="#3a1f00" stroke-width="1.4"/><line x1="214.60" y1="150" x2="544.60" y2="480" stroke="#eec866" stroke-width="3.6" opacity="0.45"/><line x1="218.60" y1="150" x2="548.60" y2="480" stroke="#e9bd45" stroke-width="1.2" opacity="0.6"/><line x1="209.60" y1="150" x2="539.60" y2="480" stroke="#d49e22" stroke-width="1.5" opacity="0.7"/><line x1="214.60" y1="150" x2="544.60" y2="480" stroke="#3a1f00" stroke-width="1.4"/><line x1="228.80" y1="150" x2="558.80" y2="480" stroke="#eec866" stroke-width="3.6" opacity="0.45"/><line x1="232.80" y1="150" x2="562.80" y2="480" stroke="#e9bd45" stroke-width="1.2" opacity="0.6"/><line x1="223.80" y1="150" x2="553.80" y2="480" stroke="#d49e22" stroke-width="1.5" opacity="0.7"/><line x1="228.80" y1="150" x2="558.80" y2="480" stroke="#3a1f00" stroke-width="1.4"/><line x1="243.00" y1="150" x2="573.00" y2="480" stroke="#eec866" stroke-width="3.6" opacity="0.45"/><line x1="247.00" y1="150" x2="577.00" y2="480" stroke="#e9bd45" stroke-width="1.2" opacity="0.6"/><line x1="238.00" y1="150" x2="568.00" y2="480" stroke="#d49e22" stroke-width="1.5" opacity="0.7"/><line x1="243.00" y1="150" x2="573.00" y2="480" stroke="#3a1f00" stroke-width="1.4"/><line x1="257.20" y1="150" x2="587.20" y2="480" stroke="#eec866" stroke-width="3.6" opacity="0.45"/><line x1="261.20" y1="150" x2="591.20" y2="480" stroke="#e9bd45" stroke-width="1.2" opacity="0.6"/><line x1="252.20" y1="150" x2="582.20" y2="480" stroke="#d49e22" stroke-width="1.5" opacity="0.7"/><line x1="257.20" y1="150" x2="587.20" y2="480" stroke="#3a1f00" stroke-width="1.4"/><line x1="271.40" y1="150" x2="601.40" y2="480" stroke="#eec866" stroke-width="3.6" opacity="0.45"/><line x1="275.40" y1="150" x2="605.40" y2="480" stroke="#e9bd45" stroke-width="1.2" opacity="0.6"/><line x1="266.40" y1="150" x2="596.40" y2="480" stroke="#d49e22" stroke-width="1.5" opacity="0.7"/><line x1="271.40" y1="150" x2="601.40" y2="480" stroke="#3a1f00" stroke-width="1.4"/><line x1="285.60" y1="150" x2="615.60" y2="480" stroke="#eec866" stroke-width="3.6" opacity="0.45"/><line x1="289.60" y1="150" x2="619.60" y2="480" stroke="#e9bd45" stroke-width="1.2" opacity="0.6"/><line x1="280.60" y1="150" x2="610.60" y2="480" stroke="#d49e22" stroke-width="1.5" opacity="0.7"/><line x1="285.60" y1="150" x2="615.60" y2="480" stroke="#3a1f00" stroke-width="1.4"/><line x1="299.80" y1="150" x2="629.80" y2="480" stroke="#eec866" stroke-width="3.6" opacity="0.45"/><line x1="303.80" y1="150" x2="633.80" y2="480" stroke="#e9bd45" stroke-width="1.2" opacity="0.6"/><line x1="294.80" y1="150" x2="624.80" y2="480" stroke="#d49e22" stroke-width="1.5" opacity="0.7"/><line x1="299.80" y1="150" x2="629.80" y2="480" stroke="#3a1f00" stroke-width="1.4"/><line x1="314.00" y1="150" x2="644.00" y2="480" stroke="#eec866" stroke-width="3.6" opacity="0.45"/><line x1="318.00" y1="150" x2="648.00" y2="480" stroke="#e9bd45" stroke-width="1.2" opacity="0.6"/><line x1="309.00" y1="150" x2="639.00" y2="480" stroke="#d49e22" stroke-width="1.5" opacity="0.7"/><line x1="314.00" y1="150" x2="644.00" y2="480" stroke="#3a1f00" stroke-width="1.4"/><line x1="328.20" y1="150" x2="658.20" y2="480" stroke="#eec866" stroke-width="3.6" opacity="0.45"/><line x1="332.20" y1="150" x2="662.20" y2="480" stroke="#e9bd45" stroke-width="1.2" opacity="0.6"/><line x1="323.20" y1="150" x2="653.20" y2="480" stroke="#d49e22" stroke-width="1.5" opacity="0.7"/><line x1="328.20" y1="150" x2="658.20" y2="480" stroke="#3a1f00" stroke-width="1.4"/><line x1="342.40" y1="150" x2="672.40" y2="480" stroke="#eec866" stroke-width="3.6" opacity="0.45"/><line x1="346.40" y1="150" x2="676.40" y2="480" stroke="#e9bd45" stroke-width="1.2" opacity="0.6"/><line x1="337.40" y1="150" x2="667.40" y2="480" stroke="#d49e22" stroke-width="1.5" opacity="0.7"/><line x1="342.40" y1="150" x2="672.40" y2="480" stroke="#3a1f00" stroke-width="1.4"/><line x1="356.60" y1="150" x2="686.60" y2="480" stroke="#eec866" stroke-width="3.6" opacity="0.45"/><line x1="360.60" y1="150" x2="690.60" y2="480" stroke="#e9bd45" stroke-width="1.2" opacity="0.6"/><line x1="351.60" y1="150" x2="681.60" y2="480" stroke="#d49e22" stroke-width="1.5" opacity="0.7"/><line x1="356.60" y1="150" x2="686.60" y2="480" stroke="#3a1f00" stroke-width="1.4"/><line x1="370.80" y1="150" x2="700.80" y2="480" stroke="#eec866" stroke-width="3.6" opacity="0.45"/><line x1="374.80" y1="150" x2="704.80" y2="480" stroke="#e9bd45" stroke-width="1.2" opacity="0.6"/><line x1="365.80" y1="150" x2="695.80" y2="480" stroke="#d49e22" stroke-width="1.5" opacity="0.7"/><line x1="370.80" y1="150" x2="700.80" y2="480" stroke="#3a1f00" stroke-width="1.4"/><line x1="385.00" y1="150" x2="715.00" y2="480" stroke="#eec866" stroke-width="3.6" opacity="0.45"/><line x1="389.00" y1="150" x2="719.00" y2="480" stroke="#e9bd45" stroke-width="1.2" opacity="0.6"/><line x1="380.00" y1="150" x2="710.00" y2="480" stroke="#d49e22" stroke-width="1.5" opacity="0.7"/><line x1="385.00" y1="150" x2="715.00" y2="480" stroke="#3a1f00" stroke-width="1.4"/><line x1="399.20" y1="150" x2="729.20" y2="480" stroke="#eec866" stroke-width="3.6" opacity="0.45"/><line x1="403.20" y1="150" x2="733.20" y2="480" stroke="#e9bd45" stroke-width="1.2" opacity="0.6"/><line x1="394.20" y1="150" x2="724.20" y2="480" stroke="#d49e22" stroke-width="1.5" opacity="0.7"/><line x1="399.20" y1="150" x2="729.20" y2="480" stroke="#3a1f00" stroke-width="1.4"/><line x1="413.40" y1="150" x2="743.40" y2="480" stroke="#eec866" stroke-width="3.6" opacity="0.45"/><line x1="417.40" y1="150" x2="747.40" y2="480" stroke="#e9bd45" stroke-width="1.2" opacity="0.6"/><line x1="408.40" y1="150" x2="738.40" y2="480" stroke="#d49e22" stroke-width="1.5" opacity="0.7"/><line x1="413.40" y1="150" x2="743.40" y2="480" stroke="#3a1f00" stroke-width="1.4"/><line x1="427.60" y1="150" x2="757.60" y2="480" stroke="#eec866" stroke-width="3.6" opacity="0.45"/><line x1="431.60" y1="150" x2="761.60" y2="480" stroke="#e9bd45" stroke-width="1.2" opacity="0.6"/><line x1="422.60" y1="150" x2="752.60" y2="480" stroke="#d49e22" stroke-width="1.5" opacity="0.7"/><line x1="427.60" y1="150" x2="757.60" y2="480" stroke="#3a1f00" stroke-width="1.4"/><line x1="441.80" y1="150" x2="771.80" y2="480" stroke="#eec866" stroke-width="3.6" opacity="0.45"/><line x1="445.80" y1="150" x2="775.80" y2="480" stroke="#e9bd45" stroke-width="1.2" opacity="0.6"/><line x1="436.80" y1="150" x2="766.80" y2="480" stroke="#d49e22" stroke-width="1.5" opacity="0.7"/><line x1="441.80" y1="150" x2="771.80" y2="480" stroke="#3a1f00" stroke-width="1.4"/><line x1="456.00" y1="150" x2="786.00" y2="480" stroke="#eec866" stroke-width="3.6" opacity="0.45"/><line x1="460.00" y1="150" x2="790.00" y2="480" stroke="#e9bd45" stroke-width="1.2" opacity="0.6"/><line x1="451.00" y1="150" x2="781.00" y2="480" stroke="#d49e22" stroke-width="1.5" opacity="0.7"/><line x1="456.00" y1="150" x2="786.00" y2="480" stroke="#3a1f00" stroke-width="1.4"/><line x1="470.20" y1="150" x2="800.20" y2="480" stroke="#eec866" stroke-width="3.6" opacity="0.45"/><line x1="474.20" y1="150" x2="804.20" y2="480" stroke="#e9bd45" stroke-width="1.2" opacity="0.6"/><line x1="465.20" y1="150" x2="795.20" y2="480" stroke="#d49e22" stroke-width="1.5" opacity="0.7"/><line x1="470.20" y1="150" x2="800.20" y2="480" stroke="#3a1f00" stroke-width="1.4"/><line x1="484.40" y1="150" x2="814.40" y2="480" stroke="#eec866" stroke-width="3.6" opacity="0.45"/><line x1="488.40" y1="150" x2="818.40" y2="480" stroke="#e9bd45" stroke-width="1.2" opacity="0.6"/><line x1="479.40" y1="150" x2="809.40" y2="480" stroke="#d49e22" stroke-width="1.5" opacity="0.7"/><line x1="484.40" y1="150" x2="814.40" y2="480" stroke="#3a1f00" stroke-width="1.4"/><line x1="498.60" y1="150" x2="828.60" y2="480" stroke="#eec866" stroke-width="3.6" opacity="0.45"/><line x1="502.60" y1="150" x2="832.60" y2="480" stroke="#e9bd45" stroke-width="1.2" opacity="0.6"/><line x1="493.60" y1="150" x2="823.60" y2="480" stroke="#d49e22" stroke-width="1.5" opacity="0.7"/><line x1="498.60" y1="150" x2="828.60" y2="480" stroke="#3a1f00" stroke-width="1.4"/><line x1="512.80" y1="150" x2="842.80" y2="480" stroke="#eec866" stroke-width="3.6" opacity="0.45"/><line x1="516.80" y1="150" x2="846.80" y2="480" stroke="#e9bd45" stroke-width="1.2" opacity="0.6"/><line x1="507.80" y1="150" x2="837.80" y2="480" stroke="#d49e22" stroke-width="1.5" opacity="0.7"/><line x1="512.80" y1="150" x2="842.80" y2="480" stroke="#3a1f00" stroke-width="1.4"/><line x1="527.00" y1="150" x2="857.00" y2="480" stroke="#eec866" stroke-width="3.6" opacity="0.45"/><line x1="531.00" y1="150" x2="861.00" y2="480" stroke="#e9bd45" stroke-width="1.2" opacity="0.6"/><line x1="522.00" y1="150" x2="852.00" y2="480" stroke="#d49e22" stroke-width="1.5" opacity="0.7"/><line x1="527.00" y1="150" x2="857.00" y2="480" stroke="#3a1f00" stroke-width="1.4"/><line x1="541.20" y1="150" x2="871.20" y2="480" stroke="#eec866" stroke-width="3.6" opacity="0.45"/><line x1="545.20" y1="150" x2="875.20" y2="480" stroke="#e9bd45" stroke-width="1.2" opacity="0.6"/><line x1="536.20" y1="150" x2="866.20" y2="480" stroke="#d49e22" stroke-width="1.5" opacity="0.7"/><line x1="541.20" y1="150" x2="871.20" y2="480" stroke="#3a1f00" stroke-width="1.4"/><line x1="555.40" y1="150" x2="885.40" y2="480" stroke="#eec866" stroke-width="3.6" opacity="0.45"/><line x1="559.40" y1="150" x2="889.40" y2="480" stroke="#e9bd45" stroke-width="1.2" opacity="0.6"/><line x1="550.40" y1="150" x2="880.40" y2="480" stroke="#d49e22" stroke-width="1.5" opacity="0.7"/><line x1="555.40" y1="150" x2="885.40" y2="480" stroke="#3a1f00" stroke-width="1.4"/><line x1="569.60" y1="150" x2="899.60" y2="480" stroke="#eec866" stroke-width="3.6" opacity="0.45"/><line x1="573.60" y1="150" x2="903.60" y2="480" stroke="#e9bd45" stroke-width="1.2" opacity="0.6"/><line x1="564.60" y1="150" x2="894.60" y2="480" stroke="#d49e22" stroke-width="1.5" opacity="0.7"/><line x1="569.60" y1="150" x2="899.60" y2="480" stroke="#3a1f00" stroke-width="1.4"/><line x1="583.80" y1="150" x2="913.80" y2="480" stroke="#eec866" stroke-width="3.6" opacity="0.45"/><line x1="587.80" y1="150" x2="917.80" y2="480" stroke="#e9bd45" stroke-width="1.2" opacity="0.6"/><line x1="578.80" y1="150" x2="908.80" y2="480" stroke="#d49e22" stroke-width="1.5" opacity="0.7"/><line x1="583.80" y1="150" x2="913.80" y2="480" stroke="#3a1f00" stroke-width="1.4"/><line x1="598.00" y1="150" x2="928.00" y2="480" stroke="#eec866" stroke-width="3.6" opacity="0.45"/><line x1="602.00" y1="150" x2="932.00" y2="480" stroke="#e9bd45" stroke-width="1.2" opacity="0.6"/><line x1="593.00" y1="150" x2="923.00" y2="480" stroke="#d49e22" stroke-width="1.5" opacity="0.7"/><line x1="598.00" y1="150" x2="928.00" y2="480" stroke="#3a1f00" stroke-width="1.4"/><line x1="612.20" y1="150" x2="942.20" y2="480" stroke="#eec866" stroke-width="3.6" opacity="0.45"/><line x1="616.20" y1="150" x2="946.20" y2="480" stroke="#e9bd45" stroke-width="1.2" opacity="0.6"/><line x1="607.20" y1="150" x2="937.20" y2="480" stroke="#d49e22" stroke-width="1.5" opacity="0.7"/><line x1="612.20" y1="150" x2="942.20" y2="480" stroke="#3a1f00" stroke-width="1.4"/><line x1="626.40" y1="150" x2="956.40" y2="480" stroke="#eec866" stroke-width="3.6" opacity="0.45"/><line x1="630.40" y1="150" x2="960.40" y2="480" stroke="#e9bd45" stroke-width="1.2" opacity="0.6"/><line x1="621.40" y1="150" x2="951.40" y2="480" stroke="#d49e22" stroke-width="1.5" opacity="0.7"/><line x1="626.40" y1="150" x2="956.40" y2="480" stroke="#3a1f00" stroke-width="1.4"/><line x1="640.60" y1="150" x2="970.60" y2="480" stroke="#eec866" stroke-width="3.6" opacity="0.45"/><line x1="644.60" y1="150" x2="974.60" y2="480" stroke="#e9bd45" stroke-width="1.2" opacity="0.6"/><line x1="635.60" y1="150" x2="965.60" y2="480" stroke="#d49e22" stroke-width="1.5" opacity="0.7"/><line x1="640.60" y1="150" x2="970.60" y2="480" stroke="#3a1f00" stroke-width="1.4"/><line x1="654.80" y1="150" x2="984.80" y2="480" stroke="#eec866" stroke-width="3.6" opacity="0.45"/><line x1="658.80" y1="150" x2="988.80" y2="480" stroke="#e9bd45" stroke-width="1.2" opacity="0.6"/><line x1="649.80" y1="150" x2="979.80" y2="480" stroke="#d49e22" stroke-width="1.5" opacity="0.7"/><line x1="654.80" y1="150" x2="984.80" y2="480" stroke="#3a1f00" stroke-width="1.4"/><line x1="669.00" y1="150" x2="999.00" y2="480" stroke="#eec866" stroke-width="3.6" opacity="0.45"/><line x1="673.00" y1="150" x2="1003.00" y2="480" stroke="#e9bd45" stroke-width="1.2" opacity="0.6"/><line x1="664.00" y1="150" x2="994.00" y2="480" stroke="#d49e22" stroke-width="1.5" opacity="0.7"/><line x1="669.00" y1="150" x2="999.00" y2="480" stroke="#3a1f00" stroke-width="1.4"/><line x1="683.20" y1="150" x2="1013.20" y2="480" stroke="#eec866" stroke-width="3.6" opacity="0.45"/><line x1="687.20" y1="150" x2="1017.20" y2="480" stroke="#e9bd45" stroke-width="1.2" opacity="0.6"/><line x1="678.20" y1="150" x2="1008.20" y2="480" stroke="#d49e22" stroke-width="1.5" opacity="0.7"/><line x1="683.20" y1="150" x2="1013.20" y2="480" stroke="#3a1f00" stroke-width="1.4"/><line x1="697.40" y1="150" x2="1027.40" y2="480" stroke="#eec866" stroke-width="3.6" opacity="0.45"/><line x1="701.40" y1="150" x2="1031.40" y2="480" stroke="#e9bd45" stroke-width="1.2" opacity="0.6"/><line x1="692.40" y1="150" x2="1022.40" y2="480" stroke="#d49e22" stroke-width="1.5" opacity="0.7"/><line x1="697.40" y1="150" x2="1027.40" y2="480" stroke="#3a1f00" stroke-width="1.4"/><line x1="711.60" y1="150" x2="1041.60" y2="480" stroke="#eec866" stroke-width="3.6" opacity="0.45"/><line x1="715.60" y1="150" x2="1045.60" y2="480" stroke="#e9bd45" stroke-width="1.2" opacity="0.6"/><line x1="706.60" y1="150" x2="1036.60" y2="480" stroke="#d49e22" stroke-width="1.5" opacity="0.7"/><line x1="711.60" y1="150" x2="1041.60" y2="480" stroke="#3a1f00" stroke-width="1.4"/><line x1="725.80" y1="150" x2="1055.80" y2="480" stroke="#eec866" stroke-width="3.6" opacity="0.45"/><line x1="729.80" y1="150" x2="1059.80" y2="480" stroke="#e9bd45" stroke-width="1.2" opacity="0.6"/><line x1="720.80" y1="150" x2="1050.80" y2="480" stroke="#d49e22" stroke-width="1.5" opacity="0.7"/><line x1="725.80" y1="150" x2="1055.80" y2="480" stroke="#3a1f00" stroke-width="1.4"/><line x1="740.00" y1="150" x2="1070.00" y2="480" stroke="#eec866" stroke-width="3.6" opacity="0.45"/><line x1="744.00" y1="150" x2="1074.00" y2="480" stroke="#e9bd45" stroke-width="1.2" opacity="0.6"/><line x1="735.00" y1="150" x2="1065.00" y2="480" stroke="#d49e22" stroke-width="1.5" opacity="0.7"/><line x1="740.00" y1="150" x2="1070.00" y2="480" stroke="#3a1f00" stroke-width="1.4"/><line x1="754.20" y1="150" x2="1084.20" y2="480" stroke="#eec866" stroke-width="3.6" opacity="0.45"/><line x1="758.20" y1="150" x2="1088.20" y2="480" stroke="#e9bd45" stroke-width="1.2" opacity="0.6"/><line x1="749.20" y1="150" x2="1079.20" y2="480" stroke="#d49e22" stroke-width="1.5" opacity="0.7"/><line x1="754.20" y1="150" x2="1084.20" y2="480" stroke="#3a1f00" stroke-width="1.4"/><line x1="768.40" y1="150" x2="1098.40" y2="480" stroke="#eec866" stroke-width="3.6" opacity="0.45"/><line x1="772.40" y1="150" x2="1102.40" y2="480" stroke="#e9bd45" stroke-width="1.2" opacity="0.6"/><line x1="763.40" y1="150" x2="1093.40" y2="480" stroke="#d49e22" stroke-width="1.5" opacity="0.7"/><line x1="768.40" y1="150" x2="1098.40" y2="480" stroke="#3a1f00" stroke-width="1.4"/><line x1="782.60" y1="150" x2="1112.60" y2="480" stroke="#eec866" stroke-width="3.6" opacity="0.45"/><line x1="786.60" y1="150" x2="1116.60" y2="480" stroke="#e9bd45" stroke-width="1.2" opacity="0.6"/><line x1="777.60" y1="150" x2="1107.60" y2="480" stroke="#d49e22" stroke-width="1.5" opacity="0.7"/><line x1="782.60" y1="150" x2="1112.60" y2="480" stroke="#3a1f00" stroke-width="1.4"/><line x1="796.80" y1="150" x2="1126.80" y2="480" stroke="#eec866" stroke-width="3.6" opacity="0.45"/><line x1="800.80" y1="150" x2="1130.80" y2="480" stroke="#e9bd45" stroke-width="1.2" opacity="0.6"/><line x1="791.80" y1="150" x2="1121.80" y2="480" stroke="#d49e22" stroke-width="1.5" opacity="0.7"/><line x1="796.80" y1="150" x2="1126.80" y2="480" stroke="#3a1f00" stroke-width="1.4"/><line x1="811.00" y1="150" x2="1141.00" y2="480" stroke="#eec866" stroke-width="3.6" opacity="0.45"/><line x1="815.00" y1="150" x2="1145.00" y2="480" stroke="#e9bd45" stroke-width="1.2" opacity="0.6"/><line x1="806.00" y1="150" x2="1136.00" y2="480" stroke="#d49e22" stroke-width="1.5" opacity="0.7"/><line x1="811.00" y1="150" x2="1141.00" y2="480" stroke="#3a1f00" stroke-width="1.4"/><line x1="825.20" y1="150" x2="1155.20" y2="480" stroke="#eec866" stroke-width="3.6" opacity="0.45"/><line x1="829.20" y1="150" x2="1159.20" y2="480" stroke="#e9bd45" stroke-width="1.2" opacity="0.6"/><line x1="820.20" y1="150" x2="1150.20" y2="480" stroke="#d49e22" stroke-width="1.5" opacity="0.7"/><line x1="825.20" y1="150" x2="1155.20" y2="480" stroke="#3a1f00" stroke-width="1.4"/><line x1="839.40" y1="150" x2="1169.40" y2="480" stroke="#eec866" stroke-width="3.6" opacity="0.45"/><line x1="843.40" y1="150" x2="1173.40" y2="480" stroke="#e9bd45" stroke-width="1.2" opacity="0.6"/><line x1="834.40" y1="150" x2="1164.40" y2="480" stroke="#d49e22" stroke-width="1.5" opacity="0.7"/><line x1="839.40" y1="150" x2="1169.40" y2="480" stroke="#3a1f00" stroke-width="1.4"/><line x1="853.60" y1="150" x2="1183.60" y2="480" stroke="#eec866" stroke-width="3.6" opacity="0.45"/><line x1="857.60" y1="150" x2="1187.60" y2="480" stroke="#e9bd45" stroke-width="1.2" opacity="0.6"/><line x1="848.60" y1="150" x2="1178.60" y2="480" stroke="#d49e22" stroke-width="1.5" opacity="0.7"/><line x1="853.60" y1="150" x2="1183.60" y2="480" stroke="#3a1f00" stroke-width="1.4"/><line x1="867.80" y1="150" x2="1197.80" y2="480" stroke="#eec866" stroke-width="3.6" opacity="0.45"/><line x1="871.80" y1="150" x2="1201.80" y2="480" stroke="#e9bd45" stroke-width="1.2" opacity="0.6"/><line x1="862.80" y1="150" x2="1192.80" y2="480" stroke="#d49e22" stroke-width="1.5" opacity="0.7"/><line x1="867.80" y1="150" x2="1197.80" y2="480" stroke="#3a1f00" stroke-width="1.4"/><line x1="882.00" y1="150" x2="1212.00" y2="480" stroke="#eec866" stroke-width="3.6" opacity="0.45"/><line x1="886.00" y1="150" x2="1216.00" y2="480" stroke="#e9bd45" stroke-width="1.2" opacity="0.6"/><line x1="877.00" y1="150" x2="1207.00" y2="480" stroke="#d49e22" stroke-width="1.5" opacity="0.7"/><line x1="882.00" y1="150" x2="1212.00" y2="480" stroke="#3a1f00" stroke-width="1.4"/><line x1="896.20" y1="150" x2="1226.20" y2="480" stroke="#eec866" stroke-width="3.6" opacity="0.45"/><line x1="900.20" y1="150" x2="1230.20" y2="480" stroke="#e9bd45" stroke-width="1.2" opacity="0.6"/><line x1="891.20" y1="150" x2="1221.20" y2="480" stroke="#d49e22" stroke-width="1.5" opacity="0.7"/><line x1="896.20" y1="150" x2="1226.20" y2="480" stroke="#3a1f00" stroke-width="1.4"/><line x1="910.40" y1="150" x2="1240.40" y2="480" stroke="#eec866" stroke-width="3.6" opacity="0.45"/><line x1="914.40" y1="150" x2="1244.40" y2="480" stroke="#e9bd45" stroke-width="1.2" opacity="0.6"/><line x1="905.40" y1="150" x2="1235.40" y2="480" stroke="#d49e22" stroke-width="1.5" opacity="0.7"/><line x1="910.40" y1="150" x2="1240.40" y2="480" stroke="#3a1f00" stroke-width="1.4"/><line x1="924.60" y1="150" x2="1254.60" y2="480" stroke="#eec866" stroke-width="3.6" opacity="0.45"/><line x1="928.60" y1="150" x2="1258.60" y2="480" stroke="#e9bd45" stroke-width="1.2" opacity="0.6"/><line x1="919.60" y1="150" x2="1249.60" y2="480" stroke="#d49e22" stroke-width="1.5" opacity="0.7"/><line x1="924.60" y1="150" x2="1254.60" y2="480" stroke="#3a1f00" stroke-width="1.4"/><line x1="938.80" y1="150" x2="1268.80" y2="480" stroke="#eec866" stroke-width="3.6" opacity="0.45"/><line x1="942.80" y1="150" x2="1272.80" y2="480" stroke="#e9bd45" stroke-width="1.2" opacity="0.6"/><line x1="933.80" y1="150" x2="1263.80" y2="480" stroke="#d49e22" stroke-width="1.5" opacity="0.7"/><line x1="938.80" y1="150" x2="1268.80" y2="480" stroke="#3a1f00" stroke-width="1.4"/><line x1="953.00" y1="150" x2="1283.00" y2="480" stroke="#eec866" stroke-width="3.6" opacity="0.45"/><line x1="957.00" y1="150" x2="1287.00" y2="480" stroke="#e9bd45" stroke-width="1.2" opacity="0.6"/><line x1="948.00" y1="150" x2="1278.00" y2="480" stroke="#d49e22" stroke-width="1.5" opacity="0.7"/><line x1="953.00" y1="150" x2="1283.00" y2="480" stroke="#3a1f00" stroke-width="1.4"/><line x1="967.20" y1="150" x2="1297.20" y2="480" stroke="#eec866" stroke-width="3.6" opacity="0.45"/><line x1="971.20" y1="150" x2="1301.20" y2="480" stroke="#e9bd45" stroke-width="1.2" opacity="0.6"/><line x1="962.20" y1="150" x2="1292.20" y2="480" stroke="#d49e22" stroke-width="1.5" opacity="0.7"/><line x1="967.20" y1="150" x2="1297.20" y2="480" stroke="#3a1f00" stroke-width="1.4"/><line x1="981.40" y1="150" x2="1311.40" y2="480" stroke="#eec866" stroke-width="3.6" opacity="0.45"/><line x1="985.40" y1="150" x2="1315.40" y2="480" stroke="#e9bd45" stroke-width="1.2" opacity="0.6"/><line x1="976.40" y1="150" x2="1306.40" y2="480" stroke="#d49e22" stroke-width="1.5" opacity="0.7"/><line x1="981.40" y1="150" x2="1311.40" y2="480" stroke="#3a1f00" stroke-width="1.4"/><line x1="995.60" y1="150" x2="1325.60" y2="480" stroke="#eec866" stroke-width="3.6" opacity="0.45"/><line x1="999.60" y1="150" x2="1329.60" y2="480" stroke="#e9bd45" stroke-width="1.2" opacity="0.6"/><line x1="990.60" y1="150" x2="1320.60" y2="480" stroke="#d49e22" stroke-width="1.5" opacity="0.7"/><line x1="995.60" y1="150" x2="1325.60" y2="480" stroke="#3a1f00" stroke-width="1.4"/></g>
<polygon points="189.50,180.50 529.20,180.50 529.20,248.44 576.76,248.44 576.76,588.14 189.50,588.14" fill="none" stroke="#524836" stroke-width="1.9"/>
<polygon points="244.4,275.4 461.5,275.4 461.5,315.6 502.5,315.6 502.5,480 394.3,480 394.3,356.2 244.4,356.2" fill="#e2c268" stroke="#e2c268" stroke-width="3.2" stroke-linejoin="miter"/>
<clipPath id="brc"><polygon points="244.4,275.4 461.5,275.4 461.5,315.6 502.5,315.6 502.5,480 394.3,480 394.3,356.2 244.4,356.2"/></clipPath>
<polygon points="244.4,275.4 461.5,275.4 461.5,315.6 502.5,315.6 502.5,480 394.3,480 394.3,356.2 244.4,356.2" fill="#8b4513"/>
<g clip-path="url(#brc)"><rect x="244.20" y="270" width="10.02" height="210" fill="#934c1a"/><line x1="247.70" y1="270" x2="247.70" y2="480" stroke="#9a5526" stroke-width="1.2" opacity="0.5"/><line x1="251.20" y1="270" x2="251.20" y2="480" stroke="#7c3a0e" stroke-width="1" opacity="0.5"/><rect x="254.22" y="270" width="10.02" height="210" fill="#874312"/><line x1="257.72" y1="270" x2="257.72" y2="480" stroke="#9a5526" stroke-width="1.2" opacity="0.5"/><line x1="261.22" y1="270" x2="261.22" y2="480" stroke="#7c3a0e" stroke-width="1" opacity="0.5"/><rect x="264.24" y="270" width="10.02" height="210" fill="#8a4414"/><line x1="267.74" y1="270" x2="267.74" y2="480" stroke="#9a5526" stroke-width="1.2" opacity="0.5"/><line x1="271.24" y1="270" x2="271.24" y2="480" stroke="#7c3a0e" stroke-width="1" opacity="0.5"/><rect x="274.26" y="270" width="10.02" height="210" fill="#8e4716"/><line x1="277.76" y1="270" x2="277.76" y2="480" stroke="#9a5526" stroke-width="1.2" opacity="0.5"/><line x1="281.26" y1="270" x2="281.26" y2="480" stroke="#7c3a0e" stroke-width="1" opacity="0.5"/><rect x="284.28" y="270" width="10.02" height="210" fill="#8e4716"/><line x1="287.78" y1="270" x2="287.78" y2="480" stroke="#9a5526" stroke-width="1.2" opacity="0.5"/><line x1="291.28" y1="270" x2="291.28" y2="480" stroke="#7c3a0e" stroke-width="1" opacity="0.5"/><rect x="294.30" y="270" width="10.02" height="210" fill="#904a18"/><line x1="297.80" y1="270" x2="297.80" y2="480" stroke="#9a5526" stroke-width="1.2" opacity="0.5"/><line x1="301.30" y1="270" x2="301.30" y2="480" stroke="#7c3a0e" stroke-width="1" opacity="0.5"/><rect x="304.32" y="270" width="10.02" height="210" fill="#8e4716"/><line x1="307.82" y1="270" x2="307.82" y2="480" stroke="#9a5526" stroke-width="1.2" opacity="0.5"/><line x1="311.32" y1="270" x2="311.32" y2="480" stroke="#7c3a0e" stroke-width="1" opacity="0.5"/><rect x="314.34" y="270" width="10.02" height="210" fill="#934c1a"/><line x1="317.84" y1="270" x2="317.84" y2="480" stroke="#9a5526" stroke-width="1.2" opacity="0.5"/><line x1="321.34" y1="270" x2="321.34" y2="480" stroke="#7c3a0e" stroke-width="1" opacity="0.5"/><rect x="324.36" y="270" width="10.02" height="210" fill="#904a18"/><line x1="327.86" y1="270" x2="327.86" y2="480" stroke="#9a5526" stroke-width="1.2" opacity="0.5"/><line x1="331.36" y1="270" x2="331.36" y2="480" stroke="#7c3a0e" stroke-width="1" opacity="0.5"/><rect x="334.38" y="270" width="10.02" height="210" fill="#8e4716"/><line x1="337.88" y1="270" x2="337.88" y2="480" stroke="#9a5526" stroke-width="1.2" opacity="0.5"/><line x1="341.38" y1="270" x2="341.38" y2="480" stroke="#7c3a0e" stroke-width="1" opacity="0.5"/><rect x="344.40" y="270" width="10.02" height="210" fill="#904a18"/><line x1="347.90" y1="270" x2="347.90" y2="480" stroke="#9a5526" stroke-width="1.2" opacity="0.5"/><line x1="351.40" y1="270" x2="351.40" y2="480" stroke="#7c3a0e" stroke-width="1" opacity="0.5"/><rect x="354.42" y="270" width="10.02" height="210" fill="#874312"/><line x1="357.92" y1="270" x2="357.92" y2="480" stroke="#9a5526" stroke-width="1.2" opacity="0.5"/><line x1="361.42" y1="270" x2="361.42" y2="480" stroke="#7c3a0e" stroke-width="1" opacity="0.5"/><rect x="364.44" y="270" width="10.02" height="210" fill="#8e4716"/><line x1="367.94" y1="270" x2="367.94" y2="480" stroke="#9a5526" stroke-width="1.2" opacity="0.5"/><line x1="371.44" y1="270" x2="371.44" y2="480" stroke="#7c3a0e" stroke-width="1" opacity="0.5"/><rect x="374.46" y="270" width="10.02" height="210" fill="#8e4716"/><line x1="377.96" y1="270" x2="377.96" y2="480" stroke="#9a5526" stroke-width="1.2" opacity="0.5"/><line x1="381.46" y1="270" x2="381.46" y2="480" stroke="#7c3a0e" stroke-width="1" opacity="0.5"/><rect x="384.48" y="270" width="10.02" height="210" fill="#8a4414"/><line x1="387.98" y1="270" x2="387.98" y2="480" stroke="#9a5526" stroke-width="1.2" opacity="0.5"/><line x1="391.48" y1="270" x2="391.48" y2="480" stroke="#7c3a0e" stroke-width="1" opacity="0.5"/><rect x="394.50" y="270" width="10.02" height="210" fill="#8a4414"/><line x1="398.00" y1="270" x2="398.00" y2="480" stroke="#9a5526" stroke-width="1.2" opacity="0.5"/><line x1="401.50" y1="270" x2="401.50" y2="480" stroke="#7c3a0e" stroke-width="1" opacity="0.5"/><rect x="404.52" y="270" width="10.02" height="210" fill="#8e4716"/><line x1="408.02" y1="270" x2="408.02" y2="480" stroke="#9a5526" stroke-width="1.2" opacity="0.5"/><line x1="411.52" y1="270" x2="411.52" y2="480" stroke="#7c3a0e" stroke-width="1" opacity="0.5"/><rect x="414.54" y="270" width="10.02" height="210" fill="#874312"/><line x1="418.04" y1="270" x2="418.04" y2="480" stroke="#9a5526" stroke-width="1.2" opacity="0.5"/><line x1="421.54" y1="270" x2="421.54" y2="480" stroke="#7c3a0e" stroke-width="1" opacity="0.5"/><rect x="424.56" y="270" width="10.02" height="210" fill="#8e4716"/><line x1="428.06" y1="270" x2="428.06" y2="480" stroke="#9a5526" stroke-width="1.2" opacity="0.5"/><line x1="431.56" y1="270" x2="431.56" y2="480" stroke="#7c3a0e" stroke-width="1" opacity="0.5"/><rect x="434.58" y="270" width="10.02" height="210" fill="#904a18"/><line x1="438.08" y1="270" x2="438.08" y2="480" stroke="#9a5526" stroke-width="1.2" opacity="0.5"/><line x1="441.58" y1="270" x2="441.58" y2="480" stroke="#7c3a0e" stroke-width="1" opacity="0.5"/><rect x="444.60" y="270" width="10.02" height="210" fill="#8a4414"/><line x1="448.10" y1="270" x2="448.10" y2="480" stroke="#9a5526" stroke-width="1.2" opacity="0.5"/><line x1="451.60" y1="270" x2="451.60" y2="480" stroke="#7c3a0e" stroke-width="1" opacity="0.5"/><rect x="454.62" y="270" width="10.02" height="210" fill="#8e4716"/><line x1="458.12" y1="270" x2="458.12" y2="480" stroke="#9a5526" stroke-width="1.2" opacity="0.5"/><line x1="461.62" y1="270" x2="461.62" y2="480" stroke="#7c3a0e" stroke-width="1" opacity="0.5"/><rect x="464.64" y="270" width="10.02" height="210" fill="#904a18"/><line x1="468.14" y1="270" x2="468.14" y2="480" stroke="#9a5526" stroke-width="1.2" opacity="0.5"/><line x1="471.64" y1="270" x2="471.64" y2="480" stroke="#7c3a0e" stroke-width="1" opacity="0.5"/><rect x="474.66" y="270" width="10.02" height="210" fill="#8e4716"/><line x1="478.16" y1="270" x2="478.16" y2="480" stroke="#9a5526" stroke-width="1.2" opacity="0.5"/><line x1="481.66" y1="270" x2="481.66" y2="480" stroke="#7c3a0e" stroke-width="1" opacity="0.5"/><rect x="484.68" y="270" width="10.02" height="210" fill="#874312"/><line x1="488.18" y1="270" x2="488.18" y2="480" stroke="#9a5526" stroke-width="1.2" opacity="0.5"/><line x1="491.68" y1="270" x2="491.68" y2="480" stroke="#7c3a0e" stroke-width="1" opacity="0.5"/><rect x="494.70" y="270" width="10.02" height="210" fill="#904a18"/><line x1="498.20" y1="270" x2="498.20" y2="480" stroke="#9a5526" stroke-width="1.2" opacity="0.5"/><line x1="501.70" y1="270" x2="501.70" y2="480" stroke="#7c3a0e" stroke-width="1" opacity="0.5"/><line x1="254.22" y1="270" x2="254.22" y2="480" stroke="#3a0c00" stroke-width="1.3"/><line x1="264.24" y1="270" x2="264.24" y2="480" stroke="#3a0c00" stroke-width="1.3"/><line x1="274.26" y1="270" x2="274.26" y2="480" stroke="#3a0c00" stroke-width="1.3"/><line x1="284.28" y1="270" x2="284.28" y2="480" stroke="#3a0c00" stroke-width="1.3"/><line x1="294.30" y1="270" x2="294.30" y2="480" stroke="#3a0c00" stroke-width="1.3"/><line x1="304.32" y1="270" x2="304.32" y2="480" stroke="#3a0c00" stroke-width="1.3"/><line x1="314.34" y1="270" x2="314.34" y2="480" stroke="#3a0c00" stroke-width="1.3"/><line x1="324.36" y1="270" x2="324.36" y2="480" stroke="#3a0c00" stroke-width="1.3"/><line x1="334.38" y1="270" x2="334.38" y2="480" stroke="#3a0c00" stroke-width="1.3"/><line x1="344.40" y1="270" x2="344.40" y2="480" stroke="#3a0c00" stroke-width="1.3"/><line x1="354.42" y1="270" x2="354.42" y2="480" stroke="#3a0c00" stroke-width="1.3"/><line x1="364.44" y1="270" x2="364.44" y2="480" stroke="#3a0c00" stroke-width="1.3"/><line x1="374.46" y1="270" x2="374.46" y2="480" stroke="#3a0c00" stroke-width="1.3"/><line x1="384.48" y1="270" x2="384.48" y2="480" stroke="#3a0c00" stroke-width="1.3"/><line x1="394.50" y1="270" x2="394.50" y2="480" stroke="#3a0c00" stroke-width="1.3"/><line x1="404.52" y1="270" x2="404.52" y2="480" stroke="#3a0c00" stroke-width="1.3"/><line x1="414.54" y1="270" x2="414.54" y2="480" stroke="#3a0c00" stroke-width="1.3"/><line x1="424.56" y1="270" x2="424.56" y2="480" stroke="#3a0c00" stroke-width="1.3"/><line x1="434.58" y1="270" x2="434.58" y2="480" stroke="#3a0c00" stroke-width="1.3"/><line x1="444.60" y1="270" x2="444.60" y2="480" stroke="#3a0c00" stroke-width="1.3"/><line x1="454.62" y1="270" x2="454.62" y2="480" stroke="#3a0c00" stroke-width="1.3"/><line x1="464.64" y1="270" x2="464.64" y2="480" stroke="#3a0c00" stroke-width="1.3"/><line x1="474.66" y1="270" x2="474.66" y2="480" stroke="#3a0c00" stroke-width="1.3"/><line x1="484.68" y1="270" x2="484.68" y2="480" stroke="#3a0c00" stroke-width="1.3"/><line x1="494.70" y1="270" x2="494.70" y2="480" stroke="#3a0c00" stroke-width="1.3"/></g>
<polygon points="244.4,275.4 461.5,275.4 461.5,315.6 502.5,315.6 502.5,480 394.3,480 394.3,356.2 244.4,356.2" fill="none" stroke="#241004" stroke-width="1.8"/>
<rect x="240.2" y="224.4" width="5.4" height="6.4" fill="#f0dc98" opacity="0.3"/><text x="242.9" y="230.0" font-size="6.7" text-anchor="middle" fill="#45351a">1</text><rect x="252.7" y="224.5" width="9.3" height="6.4" fill="#f0dc98" opacity="0.3"/><text x="257.4" y="230.1" font-size="6.7" text-anchor="middle" fill="#45351a">17</text><rect x="266.9" y="224.5" width="9.3" height="6.4" fill="#f0dc98" opacity="0.3"/><text x="271.6" y="230.1" font-size="6.7" text-anchor="middle" fill="#45351a">17</text><rect x="281.1" y="224.5" width="9.3" height="6.4" fill="#f0dc98" opacity="0.3"/><text x="285.8" y="230.1" font-size="6.7" text-anchor="middle" fill="#45351a">17</text><rect x="295.4" y="224.5" width="9.3" height="6.4" fill="#f0dc98" opacity="0.3"/><text x="300.0" y="230.1" font-size="6.7" text-anchor="middle" fill="#45351a">17</text><rect x="309.6" y="224.5" width="9.3" height="6.4" fill="#f0dc98" opacity="0.3"/><text x="314.2" y="230.1" font-size="6.7" text-anchor="middle" fill="#45351a">17</text><rect x="323.8" y="224.5" width="9.3" height="6.4" fill="#f0dc98" opacity="0.3"/><text x="328.4" y="230.1" font-size="6.7" text-anchor="middle" fill="#45351a">17</text><rect x="337.9" y="224.5" width="9.3" height="6.4" fill="#f0dc98" opacity="0.3"/><text x="342.6" y="230.1" font-size="6.7" text-anchor="middle" fill="#45351a">17</text><rect x="352.1" y="224.5" width="9.3" height="6.4" fill="#f0dc98" opacity="0.3"/><text x="356.8" y="230.1" font-size="6.7" text-anchor="middle" fill="#45351a">17</text><rect x="366.4" y="224.5" width="9.3" height="6.4" fill="#f0dc98" opacity="0.3"/><text x="371.0" y="230.1" font-size="6.7" text-anchor="middle" fill="#45351a">17</text><rect x="380.6" y="224.5" width="9.3" height="6.4" fill="#f0dc98" opacity="0.3"/><text x="385.2" y="230.1" font-size="6.7" text-anchor="middle" fill="#45351a">17</text><rect x="394.8" y="224.5" width="9.3" height="6.4" fill="#f0dc98" opacity="0.3"/><text x="399.4" y="230.1" font-size="6.7" text-anchor="middle" fill="#45351a">17</text><rect x="230.5" y="229.9" width="5.4" height="6.4" fill="#f0dc98" opacity="0.3"/><text x="233.2" y="235.5" font-size="6.7" text-anchor="middle" fill="#45351a">2</text><rect x="223.4" y="236.3" width="5.4" height="6.4" fill="#f0dc98" opacity="0.3"/><text x="226.1" y="241.9" font-size="6.7" text-anchor="middle" fill="#45351a">3</text><rect x="216.5" y="243.9" width="5.4" height="6.4" fill="#f0dc98" opacity="0.3"/><text x="219.2" y="249.5" font-size="6.7" text-anchor="middle" fill="#45351a">4</text><rect x="214.0" y="255.9" width="5.4" height="6.4" fill="#f0dc98" opacity="0.3"/><text x="216.7" y="261.5" font-size="6.7" text-anchor="middle" fill="#45351a">5</text><rect x="214.0" y="270.7" width="5.4" height="6.4" fill="#f0dc98" opacity="0.3"/><text x="216.7" y="276.3" font-size="6.7" text-anchor="middle" fill="#45351a">5</text><rect x="214.0" y="284.2" width="5.4" height="6.4" fill="#f0dc98" opacity="0.3"/><text x="216.7" y="289.8" font-size="6.7" text-anchor="middle" fill="#45351a">5</text><rect x="214.0" y="298.7" width="5.4" height="6.4" fill="#f0dc98" opacity="0.3"/><text x="216.7" y="304.3" font-size="6.7" text-anchor="middle" fill="#45351a">5</text><rect x="214.0" y="312.7" width="5.4" height="6.4" fill="#f0dc98" opacity="0.3"/><text x="216.7" y="318.3" font-size="6.7" text-anchor="middle" fill="#45351a">5</text><rect x="243.8" y="312.1" width="9.3" height="6.4" fill="#b07040" opacity="0.3"/><text x="248.5" y="317.7" font-size="6.7" text-anchor="middle" fill="#2e1206">65</text><rect x="253.9" y="312.1" width="9.3" height="6.4" fill="#b07040" opacity="0.3"/><text x="258.6" y="317.7" font-size="6.7" text-anchor="middle" fill="#2e1206">65</text><rect x="264.0" y="312.1" width="9.3" height="6.4" fill="#b07040" opacity="0.3"/><text x="268.6" y="317.7" font-size="6.7" text-anchor="middle" fill="#2e1206">65</text><rect x="274.1" y="312.1" width="9.3" height="6.4" fill="#b07040" opacity="0.3"/><text x="278.7" y="317.7" font-size="6.7" text-anchor="middle" fill="#2e1206">65</text><rect x="284.1" y="312.1" width="9.3" height="6.4" fill="#b07040" opacity="0.3"/><text x="288.8" y="317.7" font-size="6.7" text-anchor="middle" fill="#2e1206">65</text><rect x="294.2" y="312.1" width="9.3" height="6.4" fill="#b07040" opacity="0.3"/><text x="298.9" y="317.7" font-size="6.7" text-anchor="middle" fill="#2e1206">65</text><rect x="304.3" y="312.1" width="9.3" height="6.4" fill="#b07040" opacity="0.3"/><text x="308.9" y="317.7" font-size="6.7" text-anchor="middle" fill="#2e1206">65</text><rect x="314.3" y="312.1" width="9.3" height="6.4" fill="#b07040" opacity="0.3"/><text x="319.0" y="317.7" font-size="6.7" text-anchor="middle" fill="#2e1206">65</text><rect x="324.4" y="312.1" width="9.3" height="6.4" fill="#b07040" opacity="0.3"/><text x="329.1" y="317.7" font-size="6.7" text-anchor="middle" fill="#2e1206">65</text><rect x="334.5" y="312.1" width="9.3" height="6.4" fill="#b07040" opacity="0.3"/><text x="339.1" y="317.7" font-size="6.7" text-anchor="middle" fill="#2e1206">65</text><rect x="344.6" y="312.1" width="9.3" height="6.4" fill="#b07040" opacity="0.3"/><text x="349.2" y="317.7" font-size="6.7" text-anchor="middle" fill="#2e1206">65</text><rect x="354.6" y="312.1" width="9.3" height="6.4" fill="#b07040" opacity="0.3"/><text x="359.3" y="317.7" font-size="6.7" text-anchor="middle" fill="#2e1206">65</text><rect x="364.7" y="312.1" width="9.3" height="6.4" fill="#b07040" opacity="0.3"/><text x="369.3" y="317.7" font-size="6.7" text-anchor="middle" fill="#2e1206">65</text><rect x="374.8" y="312.1" width="9.3" height="6.4" fill="#b07040" opacity="0.3"/><text x="379.4" y="317.7" font-size="6.7" text-anchor="middle" fill="#2e1206">65</text><rect x="384.9" y="322.8" width="9.3" height="6.4" fill="#b07040" opacity="0.3"/><text x="389.5" y="328.4" font-size="6.7" text-anchor="middle" fill="#2e1206">66</text><rect x="394.2" y="360.1" width="9.3" height="6.4" fill="#b07040" opacity="0.3"/><text x="398.8" y="365.7" font-size="6.7" text-anchor="middle" fill="#2e1206">67</text><rect x="404.7" y="360.1" width="9.3" height="6.4" fill="#b07040" opacity="0.3"/><text x="409.3" y="365.7" font-size="6.7" text-anchor="middle" fill="#2e1206">67</text><rect x="414.9" y="360.1" width="9.3" height="6.4" fill="#b07040" opacity="0.3"/><text x="419.5" y="365.7" font-size="6.7" text-anchor="middle" fill="#2e1206">67</text><rect x="424.6" y="360.1" width="9.3" height="6.4" fill="#b07040" opacity="0.3"/><text x="429.2" y="365.7" font-size="6.7" text-anchor="middle" fill="#2e1206">67</text><rect x="434.8" y="360.1" width="9.3" height="6.4" fill="#b07040" opacity="0.3"/><text x="439.4" y="365.7" font-size="6.7" text-anchor="middle" fill="#2e1206">67</text><rect x="444.7" y="360.1" width="9.3" height="6.4" fill="#b07040" opacity="0.3"/><text x="449.3" y="365.7" font-size="6.7" text-anchor="middle" fill="#2e1206">67</text><rect x="454.9" y="367.0" width="9.3" height="6.4" fill="#b07040" opacity="0.3"/><text x="459.5" y="372.6" font-size="6.7" text-anchor="middle" fill="#2e1206">68</text><rect x="464.6" y="380.8" width="9.3" height="6.4" fill="#b07040" opacity="0.3"/><text x="469.2" y="386.4" font-size="6.7" text-anchor="middle" fill="#2e1206">69</text><rect x="475.6" y="380.8" width="9.3" height="6.4" fill="#b07040" opacity="0.3"/><text x="480.2" y="386.4" font-size="6.7" text-anchor="middle" fill="#2e1206">69</text><rect x="485.2" y="380.8" width="9.3" height="6.4" fill="#b07040" opacity="0.3"/><text x="489.9" y="386.4" font-size="6.7" text-anchor="middle" fill="#2e1206">69</text><rect x="493.6" y="380.8" width="9.3" height="6.4" fill="#b07040" opacity="0.3"/><text x="498.2" y="386.4" font-size="6.7" text-anchor="middle" fill="#2e1206">70</text><rect x="519.5" y="182.7" width="9.3" height="6.4" fill="#f0dc98" opacity="0.3"/><text x="524.1" y="188.3" font-size="6.7" text-anchor="middle" fill="#45351a">53</text><rect x="513.8" y="188.7" width="9.3" height="6.4" fill="#f0dc98" opacity="0.3"/><text x="518.4" y="194.3" font-size="6.7" text-anchor="middle" fill="#45351a">54</text><rect x="506.8" y="195.5" width="9.3" height="6.4" fill="#f0dc98" opacity="0.3"/><text x="511.4" y="201.1" font-size="6.7" text-anchor="middle" fill="#45351a">52</text><rect x="499.4" y="202.2" width="9.3" height="6.4" fill="#f0dc98" opacity="0.3"/><text x="504.0" y="207.8" font-size="6.7" text-anchor="middle" fill="#45351a">50</text><rect x="515.2" y="232.6" width="9.3" height="6.4" fill="#f0dc98" opacity="0.3"/><text x="519.9" y="238.2" font-size="6.7" text-anchor="middle" fill="#45351a">45</text><rect x="508.9" y="240.0" width="9.3" height="6.4" fill="#f0dc98" opacity="0.3"/><text x="513.5" y="245.6" font-size="6.7" text-anchor="middle" fill="#45351a">43</text><rect x="502.6" y="247.5" width="9.3" height="6.4" fill="#f0dc98" opacity="0.3"/><text x="507.2" y="253.1" font-size="6.7" text-anchor="middle" fill="#45351a">41</text><rect x="495.1" y="253.8" width="9.3" height="6.4" fill="#f0dc98" opacity="0.3"/><text x="499.7" y="259.4" font-size="6.7" text-anchor="middle" fill="#45351a">39</text><rect x="487.7" y="261.3" width="9.3" height="6.4" fill="#f0dc98" opacity="0.3"/><text x="492.3" y="266.9" font-size="6.7" text-anchor="middle" fill="#45351a">37</text><rect x="480.2" y="268.7" width="9.3" height="6.4" fill="#f0dc98" opacity="0.3"/><text x="484.9" y="274.3" font-size="6.7" text-anchor="middle" fill="#45351a">36</text><rect x="474.0" y="275.4" width="9.3" height="6.4" fill="#f0dc98" opacity="0.3"/><text x="478.6" y="281.0" font-size="6.7" text-anchor="middle" fill="#45351a">34</text><rect x="466.2" y="282.8" width="9.3" height="6.4" fill="#f0dc98" opacity="0.3"/><text x="470.8" y="288.4" font-size="6.7" text-anchor="middle" fill="#45351a">32</text><rect x="470.1" y="299.4" width="9.3" height="6.4" fill="#f0dc98" opacity="0.3"/><text x="474.7" y="305.0" font-size="6.7" text-anchor="middle" fill="#45351a">47</text><rect x="463.2" y="306.3" width="9.3" height="6.4" fill="#f0dc98" opacity="0.3"/><text x="467.8" y="311.9" font-size="6.7" text-anchor="middle" fill="#45351a">48</text><rect x="568.9" y="246.6" width="9.3" height="6.4" fill="#f0dc98" opacity="0.3"/><text x="573.5" y="252.2" font-size="6.7" text-anchor="middle" fill="#45351a">64</text><rect x="563.2" y="253.7" width="9.3" height="6.4" fill="#f0dc98" opacity="0.3"/><text x="567.9" y="259.3" font-size="6.7" text-anchor="middle" fill="#45351a">63</text><rect x="556.9" y="260.9" width="9.3" height="6.4" fill="#f0dc98" opacity="0.3"/><text x="561.5" y="266.5" font-size="6.7" text-anchor="middle" fill="#45351a">62</text><rect x="535.5" y="364.3" width="9.3" height="6.4" fill="#f0dc98" opacity="0.3"/><text x="540.1" y="369.9" font-size="6.7" text-anchor="middle" fill="#45351a">55</text><rect x="535.5" y="379.7" width="9.3" height="6.4" fill="#f0dc98" opacity="0.3"/><text x="540.1" y="385.3" font-size="6.7" text-anchor="middle" fill="#45351a">55</text><rect x="535.5" y="393.8" width="9.3" height="6.4" fill="#f0dc98" opacity="0.3"/><text x="540.1" y="399.4" font-size="6.7" text-anchor="middle" fill="#45351a">55</text><rect x="535.5" y="407.6" width="9.3" height="6.4" fill="#f0dc98" opacity="0.3"/><text x="540.1" y="413.2" font-size="6.7" text-anchor="middle" fill="#45351a">55</text><rect x="534.2" y="421.0" width="9.3" height="6.4" fill="#f0dc98" opacity="0.3"/><text x="538.9" y="426.6" font-size="6.7" text-anchor="middle" fill="#45351a">56</text><rect x="532.2" y="432.3" width="9.3" height="6.4" fill="#f0dc98" opacity="0.3"/><text x="536.9" y="437.9" font-size="6.7" text-anchor="middle" fill="#45351a">57</text><rect x="528.1" y="444.1" width="9.3" height="6.4" fill="#f0dc98" opacity="0.3"/><text x="532.8" y="449.7" font-size="6.7" text-anchor="middle" fill="#45351a">58</text><rect x="196.2" y="437.9" width="9.3" height="6.4" fill="#f0dc98" opacity="0.3"/><text x="200.8" y="443.5" font-size="6.7" text-anchor="middle" fill="#45351a">15</text><rect x="190.3" y="444.1" width="9.3" height="6.4" fill="#f0dc98" opacity="0.3"/><text x="195.0" y="449.7" font-size="6.7" text-anchor="middle" fill="#45351a">16</text><rect x="349.2" y="393.4" width="9.3" height="6.4" fill="#f0dc98" opacity="0.3"/><text x="353.8" y="399.0" font-size="6.7" text-anchor="middle" fill="#45351a">28</text><rect x="357.2" y="386.4" width="9.3" height="6.4" fill="#f0dc98" opacity="0.3"/><text x="361.8" y="392.0" font-size="6.7" text-anchor="middle" fill="#45351a">29</text><rect x="363.2" y="379.4" width="9.3" height="6.4" fill="#f0dc98" opacity="0.3"/><text x="367.9" y="385.0" font-size="6.7" text-anchor="middle" fill="#45351a">30</text><rect x="370.4" y="372.3" width="9.3" height="6.4" fill="#f0dc98" opacity="0.3"/><text x="375.0" y="377.9" font-size="6.7" text-anchor="middle" fill="#45351a">31</text><rect x="377.4" y="365.3" width="9.3" height="6.4" fill="#f0dc98" opacity="0.3"/><text x="382.0" y="370.9" font-size="6.7" text-anchor="middle" fill="#45351a">33</text><rect x="384.0" y="359.7" width="9.3" height="6.4" fill="#f0dc98" opacity="0.3"/><text x="388.6" y="365.3" font-size="6.7" text-anchor="middle" fill="#45351a">35</text><rect x="313.6" y="426.7" width="5.4" height="6.4" fill="#f0dc98" opacity="0.3"/><text x="316.3" y="432.3" font-size="6.7" text-anchor="middle" fill="#45351a">6</text><rect x="305.2" y="432.8" width="5.4" height="6.4" fill="#f0dc98" opacity="0.3"/><text x="307.9" y="438.4" font-size="6.7" text-anchor="middle" fill="#45351a">7</text><rect x="298.1" y="439.4" width="5.4" height="6.4" fill="#f0dc98" opacity="0.3"/><text x="300.8" y="445.0" font-size="6.7" text-anchor="middle" fill="#45351a">8</text><rect x="291.1" y="446.4" width="5.4" height="6.4" fill="#f0dc98" opacity="0.3"/><text x="293.8" y="452.0" font-size="6.7" text-anchor="middle" fill="#45351a">9</text>
<line x1="394.3" y1="451.4" x2="502.5" y2="451.4" stroke="#2a0c00" stroke-width="1.4"/>
<line x1="190.3" y1="451.2" x2="225.7" y2="451.2" stroke="#6e6450" stroke-width="1.3"/>
</g>
</g>
</svg>

<!-- Select hand -->
<svg class="a" style="left:23px;top:33px" width="16" height="17" viewBox="0 0 16 17">
 <defs><linearGradient id="hg" x1="0" y1="0" x2="1" y2="1"><stop offset="0" stop-color="#f0d49a"/><stop offset="1" stop-color="#d0a060"/></linearGradient></defs>
 <path d="M4.5 1.5 C4.5 0.6 6.3 0.6 6.3 1.5 L6.3 7 L7 7 L7 5.8 C7 5 8.6 5 8.6 5.8 L8.6 7 C8.6 6.2 10.2 6.2 10.2 7 L10.2 7.6 C10.2 6.9 11.8 6.9 11.8 7.6 L11.8 11.5 C11.8 14 10.5 15.8 8 15.8 L6.5 15.8 C4.5 15.8 3.6 14.5 2.8 12.8 L1.4 9.8 C1 9 2.2 8.3 2.8 9 L4.5 10.8 Z" fill="url(#hg)" stroke="#b88a4c" stroke-width="0.7"/>
 <path d="M3.2 2 L3.2 6 M1.8 3 L1.8 6" stroke="#8a7050" stroke-width="0.6" opacity="0.6"/>
</svg>
<!-- Move -->
<svg class="a" style="left:65px;top:35px" width="17" height="15" viewBox="0 0 17 15">
 <rect x="0.5" y="0.5" width="15" height="14" fill="#d8ecf8" stroke="#c0dcee" stroke-width="1"/>
 <path d="M8.5 1 L11 4 L9.6 4 L9.6 6.4 L12 6.4 L12 5 L15.5 7.5 L12 10 L12 8.6 L9.6 8.6 L9.6 11 L11 11 L8.5 14 L6 11 L7.4 11 L7.4 8.6 L5 8.6 L5 10 L1.5 7.5 L5 5 L5 6.4 L7.4 6.4 L7.4 4 L6 4 Z" fill="#7db3da" stroke="#5a90c0" stroke-width="0.5"/>
 <circle cx="8.5" cy="7.5" r="1.6" fill="#e8f4fc"/>
</svg>
<!-- Insert polygon -->
<svg class="a" style="left:107px;top:35px" width="19" height="14" viewBox="0 0 19 14">
 <path d="M4 1.5 L17.5 1 L15.5 6 L18 12.5 L2 12.5 L4 7 L1 3 Z" fill="#cce6f5" stroke="#a2cbe6" stroke-width="1"/>
 <path d="M5 4 L14 3.5 M4.5 9 L15 9.5 M6 6.5 L12 6.5" stroke="#92bedf" stroke-width="0.8"/>
</svg>
<!-- Segments -->
<svg class="a" style="left:299px;top:34px" width="19" height="17" viewBox="0 0 19 17">
 <rect x="1" y="3" width="4.5" height="13.5" fill="#f3dfa0" stroke="#e0c477" stroke-width="0.6"/>
 <rect x="5.5" y="8" width="4" height="8.5" fill="#b0dc8c" stroke="#7fb85a" stroke-width="0.6"/>
 <rect x="9.5" y="1.5" width="4" height="15" fill="#b5d5f0" stroke="#7fa9d8" stroke-width="0.6"/>
 <rect x="13.5" y="0.5" width="4" height="16" fill="#6e9fd8" stroke="#4a78b8" stroke-width="0.6"/>
</svg>
<!-- Cutting -->
<svg class="a" style="left:342px;top:34px" width="18" height="16" viewBox="0 0 18 16">
 <rect x="0.5" y="0.5" width="17" height="15" fill="#e0f0fa" stroke="#a8cde6" stroke-width="1"/>
 <path d="M0.5 4 H17.5 M0.5 7.5 H17.5 M4.5 0.5 V8 M8.5 0.5 V8 M12.5 0.5 V8" stroke="#b4d6ec" stroke-width="0.7"/>
 <rect x="1" y="8" width="16" height="7.5" fill="#a38c70"/>
 <rect x="4" y="9" width="4" height="6.5" fill="#cdb288"/>
 <rect x="10" y="9" width="3" height="6.5" fill="#efe4d6"/>
 <rect x="14" y="8" width="3" height="7.5" fill="#6e5440"/>
</svg>
<!-- Back -->
<svg class="a" style="left:392px;top:36px" width="18" height="13" viewBox="0 0 18 13">
 <path d="M1 4 L1 11.5 L7.5 11.5 L5.4 9.4 C7.6 7 12 7.5 14 12.5 L17 12 C15.5 5 10 1.5 4 3.5 Z" fill="#d9806e" stroke="#c06050" stroke-width="0.6"/>
 <path d="M6 6 C9 4.5 12.5 5.5 14.5 9" stroke="#f0b8aa" stroke-width="1" fill="none"/>
</svg>
<!-- QAT icons -->
<svg class="a" style="left:10px;top:80px" width="72" height="11" viewBox="0 0 72 11">
 <g stroke="#a8a8a8" fill="none" stroke-width="1">
  <rect x="1.5" y="2.5" width="7" height="7"/><rect x="3" y="5.5" width="4" height="4"/><path d="M6 0.5 L9 3"/>
  <rect x="13.5" y="2" width="7" height="7.5"/><rect x="15" y="5" width="4" height="4.5"/><path d="M15 2 V4 H19 V2"/>
  <rect x="31.5" y="4.5" width="8" height="4"/><path d="M33.5 4.5 V1.5 H37.5 V4.5 M33.5 8.5 V10 H37.5 V8.5"/>
 </g>
 <g stroke="#9fb6d6" fill="none" stroke-width="1.5">
  <path d="M50 3 L50 7 L54 7"/><path d="M50.5 6.5 C52 3 56 2.5 57.5 5.5 L57 9"/>
  <path d="M69 3 L69 7 L65 7"/><path d="M68.5 6.5 C67 3 63 2.5 61.5 5.5 L62 9"/>
 </g>
</svg>
<!-- tab close X -->
<svg class="a" style="left:60px;top:95px" width="9" height="8" viewBox="0 0 9 8"><path d="M1.8 1.3 L7.2 6.7 M7.2 1.3 L1.8 6.7" stroke="#b8352e" stroke-width="2"/></svg>
<svg class="a" style="left:128px;top:95px" width="9" height="8" viewBox="0 0 9 8"><path d="M1.8 1.3 L7.2 6.7 M7.2 1.3 L1.8 6.7" stroke="#b8352e" stroke-width="2"/></svg>
<!-- plus icons -->
<svg class="a" style="left:33px;top:207px" width="10" height="10" viewBox="0 0 10 10"><path d="M5 1 V9 M1 5 H9" stroke="#3aa04a" stroke-width="2.6"/></svg>
<svg class="a" style="left:18px;top:222px" width="9" height="9" viewBox="0 0 9 9"><path d="M4.5 0.5 V8.5 M0.5 4.5 H8.5" stroke="#3aa04a" stroke-width="2.4"/></svg>
<!-- spinner arrows -->
<svg class="a" style="left:174px;top:46px" width="10" height="14" viewBox="0 0 10 14"><rect x="0.5" y="0.5" width="9" height="6" fill="#ececec" stroke="#a6a6a6"/><rect x="0.5" y="6.5" width="9" height="6.5" fill="#e4e4e4" stroke="#a6a6a6"/><path d="M2.6 5 L5 2.5 L7.4 5 Z" fill="#111"/><path d="M2.6 8.5 L5 11 L7.4 8.5 Z" fill="#111"/></svg>
<svg class="a" style="left:220px;top:46px" width="10" height="14" viewBox="0 0 10 14"><rect x="0.5" y="0.5" width="9" height="6" fill="#ececec" stroke="#a6a6a6"/><rect x="0.5" y="6.5" width="9" height="6.5" fill="#e4e4e4" stroke="#a6a6a6"/><path d="M2.6 5 L5 2.5 L7.4 5 Z" fill="#111"/><path d="M2.6 8.5 L5 11 L7.4 8.5 Z" fill="#111"/></svg>
<svg class="a" style="left:271px;top:50px" width="6" height="5" viewBox="0 0 6 5"><path d="M1 1.5 L3 3.5 L5 1.5" stroke="#777" stroke-width="0.9" fill="none"/></svg>
<!-- scrollbars -->
<div class="a" style="left:582px;top:147px;width:9px;height:306px;background:#f4f4f4"></div>
<div class="a" style="left:582px;top:156px;width:9px;height:151px;background:#cdcdcd"></div>
<svg class="a" style="left:582px;top:148px" width="9" height="7" viewBox="0 0 9 7"><path d="M2.5 4.5 L4.5 2.5 L6.5 4.5" stroke="#9a9a9a" stroke-width="1" fill="none"/></svg>
<svg class="a" style="left:582px;top:444px" width="9" height="7" viewBox="0 0 9 7"><path d="M2.5 2.5 L4.5 4.5 L6.5 2.5" stroke="#9a9a9a" stroke-width="1" fill="none"/></svg>
<div class="a" style="left:155px;top:452px;width:436px;height:9px;background:#f2f2f2"></div>
<div class="a" style="left:165px;top:452px;width:244px;height:9px;background:#d3d3d3"></div>
<svg class="a" style="left:156px;top:452px" width="9" height="9" viewBox="0 0 9 9"><path d="M5.5 2.5 L3.5 4.5 L5.5 6.5" stroke="#9a9a9a" stroke-width="1" fill="none"/></svg>
<svg class="a" style="left:573px;top:452px" width="9" height="9" viewBox="0 0 9 9"><path d="M3.5 2.5 L5.5 4.5 L3.5 6.5" stroke="#9a9a9a" stroke-width="1" fill="none"/></svg>

<svg class="a" style="left:0;top:0" width="600" height="471">
<text x="16.50" y="12.4" font-size="9.4" font-weight="normal" fill="#1b1b1b" textLength="200.18" lengthAdjust="spacingAndGlyphs" stroke="#1b2230" stroke-width="0.25">COVERmat 1st - Version: 1.4.1 - Testrun - Sample01.cmp</text>
<text x="42.50" y="27.6" font-size="7.9" font-weight="normal" fill="#222" textLength="24.71" lengthAdjust="spacingAndGlyphs" stroke="#222" stroke-width="0.22">Planning</text>
<text x="81.50" y="27.6" font-size="7.9" font-weight="normal" fill="#222" textLength="31.49" lengthAdjust="spacingAndGlyphs" stroke="#222" stroke-width="0.22">Units/Scale</text>
<text x="22.00" y="59" font-size="8.1" font-weight="normal" fill="#1d4a78" textLength="16.90" lengthAdjust="spacingAndGlyphs" stroke="#1d4a78" stroke-width="0.22">Select</text>
<text x="65.80" y="59" font-size="7.9" font-weight="normal" fill="#222" textLength="15.70" lengthAdjust="spacingAndGlyphs" stroke="#222" stroke-width="0.22">Move</text>
<text x="108.20" y="58.8" font-size="7.9" font-weight="normal" fill="#222" textLength="15.21" lengthAdjust="spacingAndGlyphs" stroke="#222" stroke-width="0.22">Insert</text>
<text x="104.80" y="65.6" font-size="7.9" font-weight="normal" fill="#222" textLength="22.89" lengthAdjust="spacingAndGlyphs" stroke="#222" stroke-width="0.22">polygon</text>
<text x="67.50" y="75.3" font-size="7.4" font-weight="normal" fill="#c2c2c2" textLength="8.49" lengthAdjust="spacingAndGlyphs" stroke="#c2c2c2" stroke-width="0.22">Edit</text>
<text x="148.30" y="42.3" font-size="7.9" font-weight="normal" fill="#222" textLength="17.51" lengthAdjust="spacingAndGlyphs" stroke="#222" stroke-width="0.22">Width</text>
<text x="195.00" y="42.3" font-size="7.9" font-weight="normal" fill="#222" textLength="18.30" lengthAdjust="spacingAndGlyphs" stroke="#222" stroke-width="0.22">Height</text>
<text x="158.00" y="55.4" font-size="7.9" font-weight="normal" fill="#222" textLength="14.50" lengthAdjust="spacingAndGlyphs" stroke="#222" stroke-width="0.22">1000</text>
<text x="185.80" y="55.4" font-size="7.9" font-weight="normal" fill="#222" textLength="3.70" lengthAdjust="spacingAndGlyphs" stroke="#222" stroke-width="0.22">x</text>
<text x="208.00" y="55.4" font-size="7.9" font-weight="normal" fill="#222" textLength="9.99" lengthAdjust="spacingAndGlyphs" stroke="#222" stroke-width="0.22">800</text>
<text x="244.30" y="42.3" font-size="7.9" font-weight="normal" fill="#222" textLength="17.01" lengthAdjust="spacingAndGlyphs" stroke="#222" stroke-width="0.22">Zoom</text>
<text x="245.00" y="55.4" font-size="7.9" font-weight="normal" fill="#222" textLength="17.00" lengthAdjust="spacingAndGlyphs" stroke="#222" stroke-width="0.22">100 %</text>
<text x="207.00" y="75.3" font-size="7.4" font-weight="normal" fill="#c2c2c2" textLength="10.50" lengthAdjust="spacingAndGlyphs" stroke="#c2c2c2" stroke-width="0.22">Size</text>
<text x="294.00" y="58.8" font-size="7.9" font-weight="normal" fill="#222" textLength="27.98" lengthAdjust="spacingAndGlyphs" stroke="#222" stroke-width="0.22">Segments</text>
<text x="340.70" y="58.8" font-size="7.9" font-weight="normal" fill="#222" textLength="20.59" lengthAdjust="spacingAndGlyphs" stroke="#222" stroke-width="0.22">Cutting</text>
<text x="394.00" y="59" font-size="7.9" font-weight="normal" fill="#222" textLength="13.56" lengthAdjust="spacingAndGlyphs" stroke="#222" stroke-width="0.22">Back</text>
<text x="339.00" y="75.3" font-size="7.4" font-weight="normal" fill="#c2c2c2" textLength="31.50" lengthAdjust="spacingAndGlyphs" stroke="#c2c2c2" stroke-width="0.22">Navigation</text>
<text x="12.00" y="101.1" font-size="7.9" font-weight="normal" fill="#222" textLength="40.80" lengthAdjust="spacingAndGlyphs" stroke="#222" stroke-width="0.22">Sample02.cmp</text>
<text x="80.00" y="101.1" font-size="7.9" font-weight="normal" fill="#222" textLength="41.70" lengthAdjust="spacingAndGlyphs" stroke="#222" stroke-width="0.22">Sample01.cmp</text>
<text x="58.10" y="141.6" font-size="8" font-weight="bold" fill="#111" textLength="23.81" lengthAdjust="spacingAndGlyphs" stroke="#111" stroke-width="0.35">Object</text>
<text x="15.40" y="159.5" font-size="7.9" font-weight="normal" fill="#222" textLength="16.68" lengthAdjust="spacingAndGlyphs" stroke="#222" stroke-width="0.22">Name</text>
<text x="14.80" y="171.5" font-size="7.9" font-weight="normal" fill="#111" textLength="26.57" lengthAdjust="spacingAndGlyphs" stroke="#111" stroke-width="0.22">Softpedia</text>
<text x="60.30" y="195" font-size="8" font-weight="bold" fill="#111" textLength="18.79" lengthAdjust="spacingAndGlyphs" stroke="#111" stroke-width="0.35">Layer</text>
<text x="20.30" y="213.6" font-size="7.9" font-weight="normal" fill="#333" textLength="2.20" lengthAdjust="spacingAndGlyphs" stroke="#333" stroke-width="0.22">1</text>
<text x="54.80" y="229.8" font-size="7.9" font-weight="normal" fill="#222" textLength="43.81" lengthAdjust="spacingAndGlyphs" stroke="#222" stroke-width="0.22">Create Flooring</text>
</svg>
</body></html>
